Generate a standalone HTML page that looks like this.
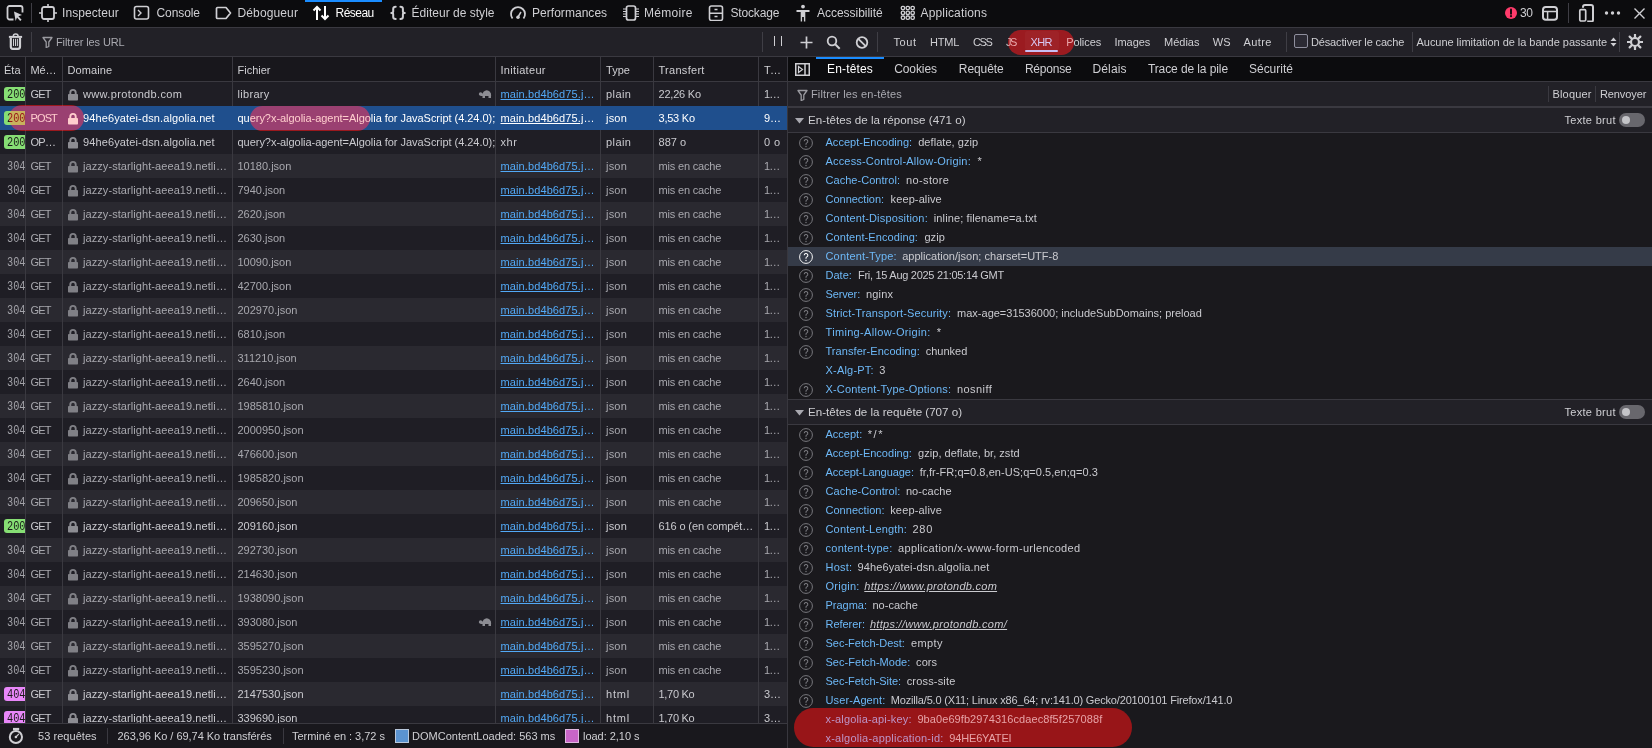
<!DOCTYPE html>
<html><head><meta charset="utf-8"><style>
html,body{margin:0;padding:0;}
body{width:1652px;height:748px;overflow:hidden;position:relative;background:#1c1b22;font-family:"Liberation Sans",sans-serif;}
.t{position:absolute;white-space:nowrap;}
.r,.s,.ann,.clip{position:absolute;}
.clip{overflow:hidden;}
.mono{font-family:"Liberation Mono",monospace;}

</style></head><body>
<div class="r" style="left:0px;top:0px;width:1652px;height:27px;background:#0c0c0e;"></div>
<div class="r" style="left:0px;top:27px;width:1652px;height:1px;background:#3a3940;"></div>
<div class="r" style="left:0px;top:28px;width:1652px;height:28px;background:#222127;"></div>
<div class="r" style="left:0px;top:56px;width:1652px;height:1px;background:#3a3940;"></div>
<div class="r" style="left:305px;top:0px;width:77px;height:1.5px;background:#1a8cff;"></div>
<svg class="s" style="left:6px;top:5px" width="18" height="17" viewBox="0 0 18 17"><path d="M7.5 14.5H3.5a2 2 0 0 1-2-2V3a2 2 0 0 1 2-2h11a2 2 0 0 1 2 2v4.5" fill="none" stroke="#cfcfd3" stroke-width="1.8"/><path d="M8 6.5l8 3.6-3.6 1.2 3.2 3.4-1.4 1.3-3.2-3.4-1.4 3.5z" fill="#cfcfd3"/></svg>
<div class="r" style="left:31px;top:3px;width:1px;height:20px;background:#3f3e45;"></div>
<svg class="s" style="left:39px;top:4px" width="18" height="18" viewBox="0 0 18 18"><rect x="3" y="3" width="12" height="12" rx="2" fill="none" stroke="#cfcfd3" stroke-width="1.8"/><path d="M9 0v3M9 15v3M0 9h3M15 9h3" stroke="#cfcfd3" stroke-width="1.6"/></svg>
<div class="t" style="left:62px;top:0.5px;line-height:24px;font-size:12px;color:#cfcfd3;letter-spacing:0.073px;">Inspecteur</div>
<svg class="s" style="left:133px;top:5px" width="18" height="16" viewBox="0 0 18 16"><rect x="1.5" y="1.5" width="14" height="12.5" rx="2" fill="none" stroke="#cfcfd3" stroke-width="1.6"/><path d="M5 5l3 3-3 3" fill="none" stroke="#cfcfd3" stroke-width="1.4"/></svg>
<div class="t" style="left:156.5px;top:0.5px;line-height:24px;font-size:12px;color:#cfcfd3;letter-spacing:-0.089px;">Console</div>
<svg class="s" style="left:215px;top:6px" width="18" height="14" viewBox="0 0 18 14"><path d="M2.5 1.5h8.5l4.5 5.5-4.5 5.5H2.5a1.2 1.2 0 0 1-1-1V2.5a1.2 1.2 0 0 1 1-1z" fill="none" stroke="#cfcfd3" stroke-width="1.7" stroke-linejoin="round"/></svg>
<div class="t" style="left:237.5px;top:0.5px;line-height:24px;font-size:12px;color:#cfcfd3;letter-spacing:0.126px;">Débogueur</div>
<svg class="s" style="left:312px;top:5px" width="18" height="16" viewBox="0 0 18 16"><path d="M5 15V2M1.5 5.5L5 2l3.5 3.5M13 1v13M9.5 10.5L13 14l3.5-3.5" fill="none" stroke="#ffffff" stroke-width="2"/></svg>
<div class="t" style="left:335.5px;top:0.5px;line-height:24px;font-size:12px;color:#ffffff;letter-spacing:-0.515px;">Réseau</div>
<svg class="s" style="left:386px;top:2px" width="24" height="22" viewBox="0 0 24 22"><path d="M9.7 4.85C8 4.85 7.2 5.5 7.2 7V9.5C7.2 10.5 6.5 10.9 5.3 10.9C6.5 10.9 7.2 11.3 7.2 12.3V15C7.2 16.5 8 17 9.7 17M14.4 4.85C16.1 4.85 16.9 5.5 16.9 7V9.5C16.9 10.5 17.6 10.9 18.8 10.9C17.6 10.9 16.9 11.3 16.9 12.3V15C16.9 16.5 16.1 17 14.4 17" fill="none" stroke="#cfcfd3" stroke-width="2" stroke-linecap="round" stroke-linejoin="round"/></svg>
<div class="t" style="left:411.5px;top:0.5px;line-height:24px;font-size:12px;color:#cfcfd3;letter-spacing:0.019px;">Éditeur de style</div>
<svg class="s" style="left:509px;top:4px" width="18" height="16" viewBox="0 0 18 16"><path d="M3.5 14.5A7 7 0 1 1 14.5 14.5" fill="none" stroke="#cfcfd3" stroke-width="1.8"/><path d="M9 13l3-5" stroke="#cfcfd3" stroke-width="1.5"/><circle cx="9" cy="13.2" r="1.8" fill="#cfcfd3"/></svg>
<div class="t" style="left:532px;top:0.5px;line-height:24px;font-size:12px;color:#cfcfd3;letter-spacing:0.036px;">Performances</div>
<svg class="s" style="left:622px;top:5px" width="18" height="16" viewBox="0 0 18 16"><rect x="4.5" y="1" width="9" height="14" rx="2" fill="none" stroke="#cfcfd3" stroke-width="1.7"/><path d="M1 4h3M1 6.5h3M1 9h3M1 11.5h3M14 4h3M14 6.5h3M14 9h3M14 11.5h3" stroke="#cfcfd3" stroke-width="1.1"/></svg>
<div class="t" style="left:644px;top:0.5px;line-height:24px;font-size:12px;color:#cfcfd3;letter-spacing:0.285px;">Mémoire</div>
<svg class="s" style="left:708px;top:5px" width="16" height="16" viewBox="0 0 16 16"><rect x="1.5" y="1" width="13" height="14.5" rx="2" fill="none" stroke="#cfcfd3" stroke-width="1.6"/><path d="M1.5 8.2h13M6.5 4.5h3M6.5 11.5h3" stroke="#cfcfd3" stroke-width="1.4"/></svg>
<div class="t" style="left:730.5px;top:0.5px;line-height:24px;font-size:12px;color:#cfcfd3;letter-spacing:-0.164px;">Stockage</div>
<svg class="s" style="left:795px;top:4px" width="16" height="18" viewBox="0 0 16 18"><circle cx="8" cy="2.6" r="1.9" fill="#cfcfd3"/><path d="M1.5 6h13v2h-4.2v9.5H8.9V13H7.1v4.5H5.7V8H1.5z" fill="#cfcfd3"/></svg>
<div class="t" style="left:817px;top:0.5px;line-height:24px;font-size:12px;color:#cfcfd3;letter-spacing:-0.028px;">Accessibilité</div>
<svg class="s" style="left:899.5px;top:5px" width="16" height="16" viewBox="0 0 16 16"><rect x="1.3" y="1.3" width="3.3" height="3.3" rx="1.3" fill="none" stroke="#cfcfd3" stroke-width="1.35"/><rect x="1.3" y="6.1499999999999995" width="3.3" height="3.3" rx="1.3" fill="none" stroke="#cfcfd3" stroke-width="1.35"/><rect x="1.3" y="11.0" width="3.3" height="3.3" rx="1.3" fill="none" stroke="#cfcfd3" stroke-width="1.35"/><rect x="6.1499999999999995" y="1.3" width="3.3" height="3.3" rx="1.3" fill="none" stroke="#cfcfd3" stroke-width="1.35"/><rect x="6.1499999999999995" y="6.1499999999999995" width="3.3" height="3.3" rx="1.3" fill="none" stroke="#cfcfd3" stroke-width="1.35"/><rect x="6.1499999999999995" y="11.0" width="3.3" height="3.3" rx="1.3" fill="none" stroke="#cfcfd3" stroke-width="1.35"/><rect x="11.0" y="1.3" width="3.3" height="3.3" rx="1.3" fill="none" stroke="#cfcfd3" stroke-width="1.35"/><rect x="11.0" y="6.1499999999999995" width="3.3" height="3.3" rx="1.3" fill="none" stroke="#cfcfd3" stroke-width="1.35"/><rect x="11.0" y="11.0" width="3.3" height="3.3" rx="1.3" fill="none" stroke="#cfcfd3" stroke-width="1.35"/></svg>
<div class="t" style="left:920.5px;top:0.5px;line-height:24px;font-size:12px;color:#cfcfd3;letter-spacing:0.153px;">Applications</div>
<svg class="s" style="left:1505px;top:7px" width="12" height="12" viewBox="0 0 12 12"><circle cx="6" cy="6" r="6" fill="#ff3b6b"/><path d="M6 2.5v4.3" stroke="#1b0a10" stroke-width="2" stroke-linecap="round"/><circle cx="6" cy="9.2" r="1.1" fill="#1b0a10"/></svg>
<div class="t" style="left:1520px;top:0.5px;line-height:24px;font-size:12px;color:#cfcfd3;letter-spacing:-0.359px;">30</div>
<svg class="s" style="left:1541px;top:5px" width="18" height="16" viewBox="0 0 18 16"><rect x="2" y="1.9" width="14" height="12.9" rx="2.8" fill="none" stroke="#cfcfd3" stroke-width="2"/><path d="M2.5 6.4h13M6.6 6.4v7.8" stroke="#cfcfd3" stroke-width="1.5"/></svg>
<div class="r" style="left:1568px;top:3px;width:1px;height:20px;background:#3f3e45;"></div>
<svg class="s" style="left:1577px;top:4px" width="18" height="18" viewBox="0 0 18 18"><path d="M6 3.8V3a2 2 0 0 1 2-2h6a2 2 0 0 1 2 2v13a1.5 1.5 0 0 1-1.5 1.5H10.2" fill="none" stroke="#cfcfd3" stroke-width="2"/><rect x="2.8" y="5.6" width="5.9" height="11.4" rx="1.2" fill="none" stroke="#cfcfd3" stroke-width="1.7"/></svg>
<svg class="s" style="left:1604px;top:10px" width="18" height="6" viewBox="0 0 18 6"><circle cx="2.5" cy="3" r="1.7" fill="#cfcfd3"/><circle cx="8.5" cy="3" r="1.7" fill="#cfcfd3"/><circle cx="14.5" cy="3" r="1.7" fill="#cfcfd3"/></svg>
<svg class="s" style="left:1633px;top:7px" width="13" height="13" viewBox="0 0 13 13"><path d="M1.5 1.5l10 10M11.5 1.5l-10 10" stroke="#cfcfd3" stroke-width="1.4"/></svg>
<svg class="s" style="left:6px;top:30px" width="20" height="24" viewBox="0 0 20 24"><path d="M7.3 6.2a2.4 2.2 0 0 1 4.8 0" fill="none" stroke="#cfcfd3" stroke-width="1.5"/><rect x="2.9" y="5.9" width="13.2" height="2" fill="#cfcfd3"/><path d="M4.8 7.9V16.8a2 2 0 0 0 2 2H12a2 2 0 0 0 2-2V7.9" fill="none" stroke="#cfcfd3" stroke-width="2.2"/><path d="M7.5 8.8v7.2M9.5 8.8v7.2M11.4 8.8v7.2" stroke="#cfcfd3" stroke-width="1"/></svg>
<div class="r" style="left:31px;top:32px;width:1px;height:20px;background:#3f3e45;"></div>
<svg class="s" style="left:42px;top:36px" width="11" height="12" viewBox="0 0 11 12"><path d="M1 1.5h9L6.8 6v4.5L4.2 11.5V6z" fill="none" stroke="#9a9aa0" stroke-width="1.3" stroke-linejoin="round"/></svg>
<div class="t" style="left:56px;top:29.5px;line-height:24px;font-size:11px;color:#a9a9b0;letter-spacing:-0.114px;">Filtrer les URL</div>
<div class="r" style="left:762px;top:32px;width:1px;height:20px;background:#3f3e45;"></div>
<div class="r" style="left:773.5px;top:36px;width:1.3px;height:10px;background:#cfcfd3;"></div>
<div class="r" style="left:780.5px;top:36px;width:1.3px;height:10px;background:#cfcfd3;"></div>
<svg class="s" style="left:800px;top:36px" width="13" height="13" viewBox="0 0 13 13"><path d="M6.5 0.5v12M0.5 6.5h12" stroke="#cfcfd3" stroke-width="1.7"/></svg>
<svg class="s" style="left:826px;top:35px" width="15" height="15" viewBox="0 0 15 15"><circle cx="6" cy="6" r="4.3" fill="none" stroke="#cfcfd3" stroke-width="1.8"/><path d="M9.2 9.2l4.5 4.5" stroke="#cfcfd3" stroke-width="2"/></svg>
<svg class="s" style="left:855px;top:36px" width="14" height="14" viewBox="0 0 14 14"><circle cx="7" cy="6.5" r="5.3" fill="none" stroke="#cfcfd3" stroke-width="1.8"/><path d="M3.3 2.8l7.4 7.4" stroke="#cfcfd3" stroke-width="1.8"/></svg>
<div class="r" style="left:877px;top:32px;width:1px;height:20px;background:#3f3e45;"></div>
<div class="t" style="left:893.5px;top:30.0px;line-height:24px;font-size:11px;color:#cfcfd3;letter-spacing:0.601px;">Tout</div>
<div class="t" style="left:930.0px;top:30.0px;line-height:24px;font-size:11px;color:#cfcfd3;letter-spacing:-0.184px;">HTML</div>
<div class="t" style="left:972.9px;top:30.0px;line-height:24px;font-size:11px;color:#cfcfd3;letter-spacing:-1.312px;">CSS</div>
<div class="t" style="left:1006.0px;top:30.0px;line-height:24px;font-size:11px;color:#cfcfd3;letter-spacing:-1.544px;">JS</div>
<div class="t" style="left:1066.2px;top:30.0px;line-height:24px;font-size:11px;color:#cfcfd3;letter-spacing:-0.078px;">Polices</div>
<div class="t" style="left:1114.5px;top:30.0px;line-height:24px;font-size:11px;color:#cfcfd3;letter-spacing:-0.056px;">Images</div>
<div class="t" style="left:1164.0px;top:30.0px;line-height:24px;font-size:11px;color:#cfcfd3;letter-spacing:0.006px;">Médias</div>
<div class="t" style="left:1212.8px;top:30.0px;line-height:24px;font-size:11px;color:#cfcfd3;letter-spacing:-0.034px;">WS</div>
<div class="t" style="left:1243.5px;top:30.0px;line-height:24px;font-size:11px;color:#cfcfd3;letter-spacing:0.401px;">Autre</div>
<div class="r" style="left:1286px;top:32px;width:1px;height:20px;background:#3f3e45;"></div>
<div class="r" style="left:1294px;top:34px;width:14px;height:14px;background:#2b2a33;box-sizing:border-box;border:1px solid #8f8f9d;border-radius:2px;"></div>
<div class="t" style="left:1311px;top:30.0px;line-height:24px;font-size:11px;color:#cfcfd3;letter-spacing:-0.150px;">Désactiver le cache</div>
<div class="r" style="left:1412px;top:32px;width:1px;height:20px;background:#3f3e45;"></div>
<div class="t" style="left:1416.5px;top:30.0px;line-height:24px;font-size:11px;color:#cfcfd3;letter-spacing:-0.036px;">Aucune limitation de la bande passante</div>
<svg class="s" style="left:1610px;top:37px" width="7" height="10" viewBox="0 0 7 10"><path d="M0.5 4L3.5 0.5 6.5 4zM0.5 6L3.5 9.5 6.5 6z" fill="#cfcfd3"/></svg>
<div class="r" style="left:1619px;top:32px;width:1px;height:20px;background:#3f3e45;"></div>
<svg class="s" style="left:1627px;top:34px" width="16" height="16" viewBox="0 0 16 16"><path d="M13.20 8.00L15.60 8.00" stroke="#cfcfd3" stroke-width="2.2" stroke-linecap="round"/><path d="M11.68 11.68L13.37 13.37" stroke="#cfcfd3" stroke-width="2.2" stroke-linecap="round"/><path d="M8.00 13.20L8.00 15.60" stroke="#cfcfd3" stroke-width="2.2" stroke-linecap="round"/><path d="M4.32 11.68L2.63 13.37" stroke="#cfcfd3" stroke-width="2.2" stroke-linecap="round"/><path d="M2.80 8.00L0.40 8.00" stroke="#cfcfd3" stroke-width="2.2" stroke-linecap="round"/><path d="M4.32 4.32L2.63 2.63" stroke="#cfcfd3" stroke-width="2.2" stroke-linecap="round"/><path d="M8.00 2.80L8.00 0.40" stroke="#cfcfd3" stroke-width="2.2" stroke-linecap="round"/><path d="M11.68 4.32L13.37 2.63" stroke="#cfcfd3" stroke-width="2.2" stroke-linecap="round"/><circle cx="8" cy="8" r="4" fill="none" stroke="#cfcfd3" stroke-width="2.2"/></svg>
<div class="r" style="left:0px;top:57px;width:787px;height:24px;background:#18171c;"></div>
<div class="r" style="left:0px;top:81px;width:787px;height:1px;background:#3a3940;"></div>
<div class="r" style="left:25px;top:57px;width:1px;height:24px;background:#3a3940;"></div>
<div class="r" style="left:62px;top:57px;width:1px;height:24px;background:#3a3940;"></div>
<div class="r" style="left:232px;top:57px;width:1px;height:24px;background:#3a3940;"></div>
<div class="r" style="left:495px;top:57px;width:1px;height:24px;background:#3a3940;"></div>
<div class="r" style="left:600px;top:57px;width:1px;height:24px;background:#3a3940;"></div>
<div class="r" style="left:653px;top:57px;width:1px;height:24px;background:#3a3940;"></div>
<div class="r" style="left:758px;top:57px;width:1px;height:24px;background:#3a3940;"></div>
<div class="t" style="left:4.0px;top:57.5px;line-height:24px;font-size:11px;color:#cfcfd3;width:17px;overflow:hidden;">Éta</div>
<div class="t" style="left:30.5px;top:57.5px;line-height:24px;font-size:11px;color:#cfcfd3;letter-spacing:-0.141px;">Mé…</div>
<div class="t" style="left:67.5px;top:57.5px;line-height:24px;font-size:11px;color:#cfcfd3;letter-spacing:0.111px;">Domaine</div>
<div class="t" style="left:237.5px;top:57.5px;line-height:24px;font-size:11px;color:#cfcfd3;">Fichier</div>
<div class="t" style="left:500.5px;top:57.5px;line-height:24px;font-size:11px;color:#cfcfd3;letter-spacing:0.311px;">Initiateur</div>
<div class="t" style="left:606.0px;top:57.5px;line-height:24px;font-size:11px;color:#cfcfd3;letter-spacing:0.014px;">Type</div>
<div class="t" style="left:658.5px;top:57.5px;line-height:24px;font-size:11px;color:#cfcfd3;letter-spacing:0.286px;">Transfert</div>
<div class="t" style="left:764.0px;top:57.5px;line-height:24px;font-size:11px;color:#cfcfd3;letter-spacing:-0.734px;">T…</div>
<div class="clip" style="left:0;top:82px;width:787px;height:641px;">
<div class="r" style="left:0px;top:0px;width:787px;height:24px;background:#1f1e25;"></div>
<div class="r" style="left:25px;top:0px;width:1px;height:24px;background:#3a3940;"></div>
<div class="r" style="left:62px;top:0px;width:1px;height:24px;background:#3a3940;"></div>
<div class="r" style="left:232px;top:0px;width:1px;height:24px;background:#3a3940;"></div>
<div class="r" style="left:495px;top:0px;width:1px;height:24px;background:#3a3940;"></div>
<div class="r" style="left:600px;top:0px;width:1px;height:24px;background:#3a3940;"></div>
<div class="r" style="left:653px;top:0px;width:1px;height:24px;background:#3a3940;"></div>
<div class="r" style="left:758px;top:0px;width:1px;height:24px;background:#3a3940;"></div>
<div class="r" style="left:4px;top:5px;width:21px;height:14px;background:#86de74;border-radius:3px 0 0 3px;"></div>
<div class="clip" style="left:4px;top:0px;width:21px;height:24px"><div class="t mono" style="left:2.6px;top:0.5px;line-height:24px;font-size:12.5px;color:#1a1a1a;transform:scaleX(0.82);transform-origin:0 0">200</div></div>
<div class="t" style="left:30.5px;top:0.0px;line-height:24px;font-size:11px;color:#cacacf;letter-spacing:-0.863px;">GET</div>
<svg class="s" style="left:68px;top:6px" width="10" height="13" viewBox="0 0 10 13"><path d="M2.3 6.5V4.6a2.7 2.7 0 0 1 5.4 0v1.9" fill="none" stroke="#8d8d93" stroke-width="1.9"/><rect x="0" y="6" width="10" height="6.5" rx="0.8" fill="#8d8d93"/></svg>
<div class="t" style="left:83px;top:0.0px;line-height:24px;font-size:11px;color:#cacacf;letter-spacing:0.364px;">www.protondb.com</div>
<div class="t" style="left:237.5px;top:0.0px;line-height:24px;font-size:11px;color:#cacacf;width:257.5px;overflow:hidden;letter-spacing:0.308px;">library</div>
<svg class="s" style="left:478px;top:7px" width="14" height="10" viewBox="0 0 14 10"><circle cx="2.6" cy="5" r="1.8" fill="#8d8d93"/><path d="M4.3 6.8A4.4 5.6 0 0 1 13.2 6.8z" fill="#8d8d93"/><rect x="2.6" y="4.6" width="10.4" height="2.4" fill="#8d8d93"/><rect x="4.5" y="6" width="2.5" height="3" fill="#8d8d93"/><rect x="10.5" y="6" width="2.5" height="3" fill="#8d8d93"/></svg>
<div class="t" style="left:500.5px;top:0.0px;line-height:24px;font-size:11px;color:#52a9f6;letter-spacing:0.110px;"><span style="text-decoration:underline">main.bd4b6d75.j</span>…</div>
<div class="t" style="left:606px;top:0.0px;line-height:24px;font-size:11px;color:#cacacf;letter-spacing:0.412px;">plain</div>
<div class="t" style="left:658.5px;top:0.0px;line-height:24px;font-size:11px;color:#cacacf;letter-spacing:-0.207px;">22,26 Ko</div>
<div class="t" style="left:764px;top:0.0px;line-height:24px;font-size:11px;color:#cacacf;letter-spacing:-0.925px;">1…</div>
<div class="r" style="left:0px;top:24px;width:787px;height:24px;background:#1f4f8d;"></div>
<div class="r" style="left:4px;top:29px;width:21px;height:14px;background:#86de74;border-radius:3px 0 0 3px;"></div>
<div class="clip" style="left:4px;top:24px;width:21px;height:24px"><div class="t mono" style="left:2.6px;top:0.5px;line-height:24px;font-size:12.5px;color:#1a1a1a;transform:scaleX(0.82);transform-origin:0 0">200</div></div>
<div class="t" style="left:30.5px;top:24.0px;line-height:24px;font-size:11px;color:#ffffff;letter-spacing:-0.884px;">POST</div>
<svg class="s" style="left:68px;top:30px" width="10" height="13" viewBox="0 0 10 13"><path d="M2.3 6.5V4.6a2.7 2.7 0 0 1 5.4 0v1.9" fill="none" stroke="#ffffff" stroke-width="1.9"/><rect x="0" y="6" width="10" height="6.5" rx="0.8" fill="#ffffff"/></svg>
<div class="t" style="left:83px;top:24.0px;line-height:24px;font-size:11px;color:#ffffff;letter-spacing:0.130px;">94he6yatei-dsn.algolia.net</div>
<div class="t" style="left:237.5px;top:24.0px;line-height:24px;font-size:11px;color:#ffffff;width:257.5px;overflow:hidden;letter-spacing:-0.035px;">query?x-algolia-agent=Algolia for JavaScript (4.24.0);</div>
<div class="t" style="left:500.5px;top:24.0px;line-height:24px;font-size:11px;color:#ffffff;letter-spacing:0.110px;"><span style="text-decoration:underline">main.bd4b6d75.j</span>…</div>
<div class="t" style="left:606px;top:24.0px;line-height:24px;font-size:11px;color:#ffffff;letter-spacing:0.204px;">json</div>
<div class="t" style="left:658.5px;top:24.0px;line-height:24px;font-size:11px;color:#ffffff;letter-spacing:-0.237px;">3,53 Ko</div>
<div class="t" style="left:764px;top:24.0px;line-height:24px;font-size:11px;color:#ffffff;letter-spacing:-0.125px;">9…</div>
<div class="r" style="left:0px;top:48px;width:787px;height:24px;background:#1f1e25;"></div>
<div class="r" style="left:25px;top:48px;width:1px;height:24px;background:#3a3940;"></div>
<div class="r" style="left:62px;top:48px;width:1px;height:24px;background:#3a3940;"></div>
<div class="r" style="left:232px;top:48px;width:1px;height:24px;background:#3a3940;"></div>
<div class="r" style="left:495px;top:48px;width:1px;height:24px;background:#3a3940;"></div>
<div class="r" style="left:600px;top:48px;width:1px;height:24px;background:#3a3940;"></div>
<div class="r" style="left:653px;top:48px;width:1px;height:24px;background:#3a3940;"></div>
<div class="r" style="left:758px;top:48px;width:1px;height:24px;background:#3a3940;"></div>
<div class="r" style="left:4px;top:53px;width:21px;height:14px;background:#86de74;border-radius:3px 0 0 3px;"></div>
<div class="clip" style="left:4px;top:48px;width:21px;height:24px"><div class="t mono" style="left:2.6px;top:0.5px;line-height:24px;font-size:12.5px;color:#1a1a1a;transform:scaleX(0.82);transform-origin:0 0">200</div></div>
<div class="t" style="left:30.5px;top:48.0px;line-height:24px;font-size:11px;color:#cacacf;letter-spacing:-0.703px;">OP…</div>
<svg class="s" style="left:68px;top:54px" width="10" height="13" viewBox="0 0 10 13"><path d="M2.3 6.5V4.6a2.7 2.7 0 0 1 5.4 0v1.9" fill="none" stroke="#8d8d93" stroke-width="1.9"/><rect x="0" y="6" width="10" height="6.5" rx="0.8" fill="#8d8d93"/></svg>
<div class="t" style="left:83px;top:48.0px;line-height:24px;font-size:11px;color:#cacacf;letter-spacing:0.130px;">94he6yatei-dsn.algolia.net</div>
<div class="t" style="left:237.5px;top:48.0px;line-height:24px;font-size:11px;color:#cacacf;width:257.5px;overflow:hidden;letter-spacing:-0.035px;">query?x-algolia-agent=Algolia for JavaScript (4.24.0);</div>
<div class="t" style="left:500.5px;top:48.0px;line-height:24px;font-size:11px;color:#cacacf;letter-spacing:0.509px;">xhr</div>
<div class="t" style="left:606px;top:48.0px;line-height:24px;font-size:11px;color:#cacacf;letter-spacing:0.412px;">plain</div>
<div class="t" style="left:658.5px;top:48.0px;line-height:24px;font-size:11px;color:#cacacf;letter-spacing:0.017px;">887 o</div>
<div class="t" style="left:764px;top:48.0px;line-height:24px;font-size:11px;color:#cacacf;letter-spacing:0.452px;">0 o</div>
<div class="r" style="left:0px;top:72px;width:787px;height:24px;background:#2a2930;"></div>
<div class="r" style="left:25px;top:72px;width:1px;height:24px;background:#3a3940;"></div>
<div class="r" style="left:62px;top:72px;width:1px;height:24px;background:#3a3940;"></div>
<div class="r" style="left:232px;top:72px;width:1px;height:24px;background:#3a3940;"></div>
<div class="r" style="left:495px;top:72px;width:1px;height:24px;background:#3a3940;"></div>
<div class="r" style="left:600px;top:72px;width:1px;height:24px;background:#3a3940;"></div>
<div class="r" style="left:653px;top:72px;width:1px;height:24px;background:#3a3940;"></div>
<div class="r" style="left:758px;top:72px;width:1px;height:24px;background:#3a3940;"></div>
<div class="clip" style="left:4px;top:72px;width:21px;height:24px"><div class="t mono" style="left:2.6px;top:0.5px;line-height:24px;font-size:12.5px;color:#a3a3a9;transform:scaleX(0.82);transform-origin:0 0">304</div></div>
<div class="t" style="left:30.5px;top:72.0px;line-height:24px;font-size:11px;color:#a8a8ae;letter-spacing:-0.863px;">GET</div>
<svg class="s" style="left:68px;top:78px" width="10" height="13" viewBox="0 0 10 13"><path d="M2.3 6.5V4.6a2.7 2.7 0 0 1 5.4 0v1.9" fill="none" stroke="#808086" stroke-width="1.9"/><rect x="0" y="6" width="10" height="6.5" rx="0.8" fill="#808086"/></svg>
<div class="t" style="left:83px;top:72.0px;line-height:24px;font-size:11px;color:#a8a8ae;letter-spacing:0.073px;">jazzy-starlight-aeea19.netli…</div>
<div class="t" style="left:237.5px;top:72.0px;line-height:24px;font-size:11px;color:#a8a8ae;width:257.5px;overflow:hidden;">10180.json</div>
<div class="t" style="left:500.5px;top:72.0px;line-height:24px;font-size:11px;color:#52a9f6;letter-spacing:0.110px;"><span style="text-decoration:underline">main.bd4b6d75.j</span>…</div>
<div class="t" style="left:606px;top:72.0px;line-height:24px;font-size:11px;color:#a8a8ae;letter-spacing:0.204px;">json</div>
<div class="t" style="left:658.5px;top:72.0px;line-height:24px;font-size:11px;color:#a8a8ae;letter-spacing:-0.174px;">mis en cache</div>
<div class="t" style="left:764px;top:72.0px;line-height:24px;font-size:11px;color:#a8a8ae;letter-spacing:-0.925px;">1…</div>
<div class="r" style="left:0px;top:96px;width:787px;height:24px;background:#1f1e25;"></div>
<div class="r" style="left:25px;top:96px;width:1px;height:24px;background:#3a3940;"></div>
<div class="r" style="left:62px;top:96px;width:1px;height:24px;background:#3a3940;"></div>
<div class="r" style="left:232px;top:96px;width:1px;height:24px;background:#3a3940;"></div>
<div class="r" style="left:495px;top:96px;width:1px;height:24px;background:#3a3940;"></div>
<div class="r" style="left:600px;top:96px;width:1px;height:24px;background:#3a3940;"></div>
<div class="r" style="left:653px;top:96px;width:1px;height:24px;background:#3a3940;"></div>
<div class="r" style="left:758px;top:96px;width:1px;height:24px;background:#3a3940;"></div>
<div class="clip" style="left:4px;top:96px;width:21px;height:24px"><div class="t mono" style="left:2.6px;top:0.5px;line-height:24px;font-size:12.5px;color:#a3a3a9;transform:scaleX(0.82);transform-origin:0 0">304</div></div>
<div class="t" style="left:30.5px;top:96.0px;line-height:24px;font-size:11px;color:#a8a8ae;letter-spacing:-0.863px;">GET</div>
<svg class="s" style="left:68px;top:102px" width="10" height="13" viewBox="0 0 10 13"><path d="M2.3 6.5V4.6a2.7 2.7 0 0 1 5.4 0v1.9" fill="none" stroke="#808086" stroke-width="1.9"/><rect x="0" y="6" width="10" height="6.5" rx="0.8" fill="#808086"/></svg>
<div class="t" style="left:83px;top:96.0px;line-height:24px;font-size:11px;color:#a8a8ae;letter-spacing:0.073px;">jazzy-starlight-aeea19.netli…</div>
<div class="t" style="left:237.5px;top:96.0px;line-height:24px;font-size:11px;color:#a8a8ae;width:257.5px;overflow:hidden;">7940.json</div>
<div class="t" style="left:500.5px;top:96.0px;line-height:24px;font-size:11px;color:#52a9f6;letter-spacing:0.110px;"><span style="text-decoration:underline">main.bd4b6d75.j</span>…</div>
<div class="t" style="left:606px;top:96.0px;line-height:24px;font-size:11px;color:#a8a8ae;letter-spacing:0.204px;">json</div>
<div class="t" style="left:658.5px;top:96.0px;line-height:24px;font-size:11px;color:#a8a8ae;letter-spacing:-0.174px;">mis en cache</div>
<div class="t" style="left:764px;top:96.0px;line-height:24px;font-size:11px;color:#a8a8ae;letter-spacing:-0.925px;">1…</div>
<div class="r" style="left:0px;top:120px;width:787px;height:24px;background:#2a2930;"></div>
<div class="r" style="left:25px;top:120px;width:1px;height:24px;background:#3a3940;"></div>
<div class="r" style="left:62px;top:120px;width:1px;height:24px;background:#3a3940;"></div>
<div class="r" style="left:232px;top:120px;width:1px;height:24px;background:#3a3940;"></div>
<div class="r" style="left:495px;top:120px;width:1px;height:24px;background:#3a3940;"></div>
<div class="r" style="left:600px;top:120px;width:1px;height:24px;background:#3a3940;"></div>
<div class="r" style="left:653px;top:120px;width:1px;height:24px;background:#3a3940;"></div>
<div class="r" style="left:758px;top:120px;width:1px;height:24px;background:#3a3940;"></div>
<div class="clip" style="left:4px;top:120px;width:21px;height:24px"><div class="t mono" style="left:2.6px;top:0.5px;line-height:24px;font-size:12.5px;color:#a3a3a9;transform:scaleX(0.82);transform-origin:0 0">304</div></div>
<div class="t" style="left:30.5px;top:120.0px;line-height:24px;font-size:11px;color:#a8a8ae;letter-spacing:-0.863px;">GET</div>
<svg class="s" style="left:68px;top:126px" width="10" height="13" viewBox="0 0 10 13"><path d="M2.3 6.5V4.6a2.7 2.7 0 0 1 5.4 0v1.9" fill="none" stroke="#808086" stroke-width="1.9"/><rect x="0" y="6" width="10" height="6.5" rx="0.8" fill="#808086"/></svg>
<div class="t" style="left:83px;top:120.0px;line-height:24px;font-size:11px;color:#a8a8ae;letter-spacing:0.073px;">jazzy-starlight-aeea19.netli…</div>
<div class="t" style="left:237.5px;top:120.0px;line-height:24px;font-size:11px;color:#a8a8ae;width:257.5px;overflow:hidden;">2620.json</div>
<div class="t" style="left:500.5px;top:120.0px;line-height:24px;font-size:11px;color:#52a9f6;letter-spacing:0.110px;"><span style="text-decoration:underline">main.bd4b6d75.j</span>…</div>
<div class="t" style="left:606px;top:120.0px;line-height:24px;font-size:11px;color:#a8a8ae;letter-spacing:0.204px;">json</div>
<div class="t" style="left:658.5px;top:120.0px;line-height:24px;font-size:11px;color:#a8a8ae;letter-spacing:-0.174px;">mis en cache</div>
<div class="t" style="left:764px;top:120.0px;line-height:24px;font-size:11px;color:#a8a8ae;letter-spacing:-0.925px;">1…</div>
<div class="r" style="left:0px;top:144px;width:787px;height:24px;background:#1f1e25;"></div>
<div class="r" style="left:25px;top:144px;width:1px;height:24px;background:#3a3940;"></div>
<div class="r" style="left:62px;top:144px;width:1px;height:24px;background:#3a3940;"></div>
<div class="r" style="left:232px;top:144px;width:1px;height:24px;background:#3a3940;"></div>
<div class="r" style="left:495px;top:144px;width:1px;height:24px;background:#3a3940;"></div>
<div class="r" style="left:600px;top:144px;width:1px;height:24px;background:#3a3940;"></div>
<div class="r" style="left:653px;top:144px;width:1px;height:24px;background:#3a3940;"></div>
<div class="r" style="left:758px;top:144px;width:1px;height:24px;background:#3a3940;"></div>
<div class="clip" style="left:4px;top:144px;width:21px;height:24px"><div class="t mono" style="left:2.6px;top:0.5px;line-height:24px;font-size:12.5px;color:#a3a3a9;transform:scaleX(0.82);transform-origin:0 0">304</div></div>
<div class="t" style="left:30.5px;top:144.0px;line-height:24px;font-size:11px;color:#a8a8ae;letter-spacing:-0.863px;">GET</div>
<svg class="s" style="left:68px;top:150px" width="10" height="13" viewBox="0 0 10 13"><path d="M2.3 6.5V4.6a2.7 2.7 0 0 1 5.4 0v1.9" fill="none" stroke="#808086" stroke-width="1.9"/><rect x="0" y="6" width="10" height="6.5" rx="0.8" fill="#808086"/></svg>
<div class="t" style="left:83px;top:144.0px;line-height:24px;font-size:11px;color:#a8a8ae;letter-spacing:0.073px;">jazzy-starlight-aeea19.netli…</div>
<div class="t" style="left:237.5px;top:144.0px;line-height:24px;font-size:11px;color:#a8a8ae;width:257.5px;overflow:hidden;">2630.json</div>
<div class="t" style="left:500.5px;top:144.0px;line-height:24px;font-size:11px;color:#52a9f6;letter-spacing:0.110px;"><span style="text-decoration:underline">main.bd4b6d75.j</span>…</div>
<div class="t" style="left:606px;top:144.0px;line-height:24px;font-size:11px;color:#a8a8ae;letter-spacing:0.204px;">json</div>
<div class="t" style="left:658.5px;top:144.0px;line-height:24px;font-size:11px;color:#a8a8ae;letter-spacing:-0.174px;">mis en cache</div>
<div class="t" style="left:764px;top:144.0px;line-height:24px;font-size:11px;color:#a8a8ae;letter-spacing:-0.925px;">1…</div>
<div class="r" style="left:0px;top:168px;width:787px;height:24px;background:#2a2930;"></div>
<div class="r" style="left:25px;top:168px;width:1px;height:24px;background:#3a3940;"></div>
<div class="r" style="left:62px;top:168px;width:1px;height:24px;background:#3a3940;"></div>
<div class="r" style="left:232px;top:168px;width:1px;height:24px;background:#3a3940;"></div>
<div class="r" style="left:495px;top:168px;width:1px;height:24px;background:#3a3940;"></div>
<div class="r" style="left:600px;top:168px;width:1px;height:24px;background:#3a3940;"></div>
<div class="r" style="left:653px;top:168px;width:1px;height:24px;background:#3a3940;"></div>
<div class="r" style="left:758px;top:168px;width:1px;height:24px;background:#3a3940;"></div>
<div class="clip" style="left:4px;top:168px;width:21px;height:24px"><div class="t mono" style="left:2.6px;top:0.5px;line-height:24px;font-size:12.5px;color:#a3a3a9;transform:scaleX(0.82);transform-origin:0 0">304</div></div>
<div class="t" style="left:30.5px;top:168.0px;line-height:24px;font-size:11px;color:#a8a8ae;letter-spacing:-0.863px;">GET</div>
<svg class="s" style="left:68px;top:174px" width="10" height="13" viewBox="0 0 10 13"><path d="M2.3 6.5V4.6a2.7 2.7 0 0 1 5.4 0v1.9" fill="none" stroke="#808086" stroke-width="1.9"/><rect x="0" y="6" width="10" height="6.5" rx="0.8" fill="#808086"/></svg>
<div class="t" style="left:83px;top:168.0px;line-height:24px;font-size:11px;color:#a8a8ae;letter-spacing:0.073px;">jazzy-starlight-aeea19.netli…</div>
<div class="t" style="left:237.5px;top:168.0px;line-height:24px;font-size:11px;color:#a8a8ae;width:257.5px;overflow:hidden;">10090.json</div>
<div class="t" style="left:500.5px;top:168.0px;line-height:24px;font-size:11px;color:#52a9f6;letter-spacing:0.110px;"><span style="text-decoration:underline">main.bd4b6d75.j</span>…</div>
<div class="t" style="left:606px;top:168.0px;line-height:24px;font-size:11px;color:#a8a8ae;letter-spacing:0.204px;">json</div>
<div class="t" style="left:658.5px;top:168.0px;line-height:24px;font-size:11px;color:#a8a8ae;letter-spacing:-0.174px;">mis en cache</div>
<div class="t" style="left:764px;top:168.0px;line-height:24px;font-size:11px;color:#a8a8ae;letter-spacing:-0.925px;">1…</div>
<div class="r" style="left:0px;top:192px;width:787px;height:24px;background:#1f1e25;"></div>
<div class="r" style="left:25px;top:192px;width:1px;height:24px;background:#3a3940;"></div>
<div class="r" style="left:62px;top:192px;width:1px;height:24px;background:#3a3940;"></div>
<div class="r" style="left:232px;top:192px;width:1px;height:24px;background:#3a3940;"></div>
<div class="r" style="left:495px;top:192px;width:1px;height:24px;background:#3a3940;"></div>
<div class="r" style="left:600px;top:192px;width:1px;height:24px;background:#3a3940;"></div>
<div class="r" style="left:653px;top:192px;width:1px;height:24px;background:#3a3940;"></div>
<div class="r" style="left:758px;top:192px;width:1px;height:24px;background:#3a3940;"></div>
<div class="clip" style="left:4px;top:192px;width:21px;height:24px"><div class="t mono" style="left:2.6px;top:0.5px;line-height:24px;font-size:12.5px;color:#a3a3a9;transform:scaleX(0.82);transform-origin:0 0">304</div></div>
<div class="t" style="left:30.5px;top:192.0px;line-height:24px;font-size:11px;color:#a8a8ae;letter-spacing:-0.863px;">GET</div>
<svg class="s" style="left:68px;top:198px" width="10" height="13" viewBox="0 0 10 13"><path d="M2.3 6.5V4.6a2.7 2.7 0 0 1 5.4 0v1.9" fill="none" stroke="#808086" stroke-width="1.9"/><rect x="0" y="6" width="10" height="6.5" rx="0.8" fill="#808086"/></svg>
<div class="t" style="left:83px;top:192.0px;line-height:24px;font-size:11px;color:#a8a8ae;letter-spacing:0.073px;">jazzy-starlight-aeea19.netli…</div>
<div class="t" style="left:237.5px;top:192.0px;line-height:24px;font-size:11px;color:#a8a8ae;width:257.5px;overflow:hidden;">42700.json</div>
<div class="t" style="left:500.5px;top:192.0px;line-height:24px;font-size:11px;color:#52a9f6;letter-spacing:0.110px;"><span style="text-decoration:underline">main.bd4b6d75.j</span>…</div>
<div class="t" style="left:606px;top:192.0px;line-height:24px;font-size:11px;color:#a8a8ae;letter-spacing:0.204px;">json</div>
<div class="t" style="left:658.5px;top:192.0px;line-height:24px;font-size:11px;color:#a8a8ae;letter-spacing:-0.174px;">mis en cache</div>
<div class="t" style="left:764px;top:192.0px;line-height:24px;font-size:11px;color:#a8a8ae;letter-spacing:-0.925px;">1…</div>
<div class="r" style="left:0px;top:216px;width:787px;height:24px;background:#2a2930;"></div>
<div class="r" style="left:25px;top:216px;width:1px;height:24px;background:#3a3940;"></div>
<div class="r" style="left:62px;top:216px;width:1px;height:24px;background:#3a3940;"></div>
<div class="r" style="left:232px;top:216px;width:1px;height:24px;background:#3a3940;"></div>
<div class="r" style="left:495px;top:216px;width:1px;height:24px;background:#3a3940;"></div>
<div class="r" style="left:600px;top:216px;width:1px;height:24px;background:#3a3940;"></div>
<div class="r" style="left:653px;top:216px;width:1px;height:24px;background:#3a3940;"></div>
<div class="r" style="left:758px;top:216px;width:1px;height:24px;background:#3a3940;"></div>
<div class="clip" style="left:4px;top:216px;width:21px;height:24px"><div class="t mono" style="left:2.6px;top:0.5px;line-height:24px;font-size:12.5px;color:#a3a3a9;transform:scaleX(0.82);transform-origin:0 0">304</div></div>
<div class="t" style="left:30.5px;top:216.0px;line-height:24px;font-size:11px;color:#a8a8ae;letter-spacing:-0.863px;">GET</div>
<svg class="s" style="left:68px;top:222px" width="10" height="13" viewBox="0 0 10 13"><path d="M2.3 6.5V4.6a2.7 2.7 0 0 1 5.4 0v1.9" fill="none" stroke="#808086" stroke-width="1.9"/><rect x="0" y="6" width="10" height="6.5" rx="0.8" fill="#808086"/></svg>
<div class="t" style="left:83px;top:216.0px;line-height:24px;font-size:11px;color:#a8a8ae;letter-spacing:0.073px;">jazzy-starlight-aeea19.netli…</div>
<div class="t" style="left:237.5px;top:216.0px;line-height:24px;font-size:11px;color:#a8a8ae;width:257.5px;overflow:hidden;">202970.json</div>
<div class="t" style="left:500.5px;top:216.0px;line-height:24px;font-size:11px;color:#52a9f6;letter-spacing:0.110px;"><span style="text-decoration:underline">main.bd4b6d75.j</span>…</div>
<div class="t" style="left:606px;top:216.0px;line-height:24px;font-size:11px;color:#a8a8ae;letter-spacing:0.204px;">json</div>
<div class="t" style="left:658.5px;top:216.0px;line-height:24px;font-size:11px;color:#a8a8ae;letter-spacing:-0.174px;">mis en cache</div>
<div class="t" style="left:764px;top:216.0px;line-height:24px;font-size:11px;color:#a8a8ae;letter-spacing:-0.925px;">1…</div>
<div class="r" style="left:0px;top:240px;width:787px;height:24px;background:#1f1e25;"></div>
<div class="r" style="left:25px;top:240px;width:1px;height:24px;background:#3a3940;"></div>
<div class="r" style="left:62px;top:240px;width:1px;height:24px;background:#3a3940;"></div>
<div class="r" style="left:232px;top:240px;width:1px;height:24px;background:#3a3940;"></div>
<div class="r" style="left:495px;top:240px;width:1px;height:24px;background:#3a3940;"></div>
<div class="r" style="left:600px;top:240px;width:1px;height:24px;background:#3a3940;"></div>
<div class="r" style="left:653px;top:240px;width:1px;height:24px;background:#3a3940;"></div>
<div class="r" style="left:758px;top:240px;width:1px;height:24px;background:#3a3940;"></div>
<div class="clip" style="left:4px;top:240px;width:21px;height:24px"><div class="t mono" style="left:2.6px;top:0.5px;line-height:24px;font-size:12.5px;color:#a3a3a9;transform:scaleX(0.82);transform-origin:0 0">304</div></div>
<div class="t" style="left:30.5px;top:240.0px;line-height:24px;font-size:11px;color:#a8a8ae;letter-spacing:-0.863px;">GET</div>
<svg class="s" style="left:68px;top:246px" width="10" height="13" viewBox="0 0 10 13"><path d="M2.3 6.5V4.6a2.7 2.7 0 0 1 5.4 0v1.9" fill="none" stroke="#808086" stroke-width="1.9"/><rect x="0" y="6" width="10" height="6.5" rx="0.8" fill="#808086"/></svg>
<div class="t" style="left:83px;top:240.0px;line-height:24px;font-size:11px;color:#a8a8ae;letter-spacing:0.073px;">jazzy-starlight-aeea19.netli…</div>
<div class="t" style="left:237.5px;top:240.0px;line-height:24px;font-size:11px;color:#a8a8ae;width:257.5px;overflow:hidden;">6810.json</div>
<div class="t" style="left:500.5px;top:240.0px;line-height:24px;font-size:11px;color:#52a9f6;letter-spacing:0.110px;"><span style="text-decoration:underline">main.bd4b6d75.j</span>…</div>
<div class="t" style="left:606px;top:240.0px;line-height:24px;font-size:11px;color:#a8a8ae;letter-spacing:0.204px;">json</div>
<div class="t" style="left:658.5px;top:240.0px;line-height:24px;font-size:11px;color:#a8a8ae;letter-spacing:-0.174px;">mis en cache</div>
<div class="t" style="left:764px;top:240.0px;line-height:24px;font-size:11px;color:#a8a8ae;letter-spacing:-0.925px;">1…</div>
<div class="r" style="left:0px;top:264px;width:787px;height:24px;background:#2a2930;"></div>
<div class="r" style="left:25px;top:264px;width:1px;height:24px;background:#3a3940;"></div>
<div class="r" style="left:62px;top:264px;width:1px;height:24px;background:#3a3940;"></div>
<div class="r" style="left:232px;top:264px;width:1px;height:24px;background:#3a3940;"></div>
<div class="r" style="left:495px;top:264px;width:1px;height:24px;background:#3a3940;"></div>
<div class="r" style="left:600px;top:264px;width:1px;height:24px;background:#3a3940;"></div>
<div class="r" style="left:653px;top:264px;width:1px;height:24px;background:#3a3940;"></div>
<div class="r" style="left:758px;top:264px;width:1px;height:24px;background:#3a3940;"></div>
<div class="clip" style="left:4px;top:264px;width:21px;height:24px"><div class="t mono" style="left:2.6px;top:0.5px;line-height:24px;font-size:12.5px;color:#a3a3a9;transform:scaleX(0.82);transform-origin:0 0">304</div></div>
<div class="t" style="left:30.5px;top:264.0px;line-height:24px;font-size:11px;color:#a8a8ae;letter-spacing:-0.863px;">GET</div>
<svg class="s" style="left:68px;top:270px" width="10" height="13" viewBox="0 0 10 13"><path d="M2.3 6.5V4.6a2.7 2.7 0 0 1 5.4 0v1.9" fill="none" stroke="#808086" stroke-width="1.9"/><rect x="0" y="6" width="10" height="6.5" rx="0.8" fill="#808086"/></svg>
<div class="t" style="left:83px;top:264.0px;line-height:24px;font-size:11px;color:#a8a8ae;letter-spacing:0.073px;">jazzy-starlight-aeea19.netli…</div>
<div class="t" style="left:237.5px;top:264.0px;line-height:24px;font-size:11px;color:#a8a8ae;width:257.5px;overflow:hidden;">311210.json</div>
<div class="t" style="left:500.5px;top:264.0px;line-height:24px;font-size:11px;color:#52a9f6;letter-spacing:0.110px;"><span style="text-decoration:underline">main.bd4b6d75.j</span>…</div>
<div class="t" style="left:606px;top:264.0px;line-height:24px;font-size:11px;color:#a8a8ae;letter-spacing:0.204px;">json</div>
<div class="t" style="left:658.5px;top:264.0px;line-height:24px;font-size:11px;color:#a8a8ae;letter-spacing:-0.174px;">mis en cache</div>
<div class="t" style="left:764px;top:264.0px;line-height:24px;font-size:11px;color:#a8a8ae;letter-spacing:-0.925px;">1…</div>
<div class="r" style="left:0px;top:288px;width:787px;height:24px;background:#1f1e25;"></div>
<div class="r" style="left:25px;top:288px;width:1px;height:24px;background:#3a3940;"></div>
<div class="r" style="left:62px;top:288px;width:1px;height:24px;background:#3a3940;"></div>
<div class="r" style="left:232px;top:288px;width:1px;height:24px;background:#3a3940;"></div>
<div class="r" style="left:495px;top:288px;width:1px;height:24px;background:#3a3940;"></div>
<div class="r" style="left:600px;top:288px;width:1px;height:24px;background:#3a3940;"></div>
<div class="r" style="left:653px;top:288px;width:1px;height:24px;background:#3a3940;"></div>
<div class="r" style="left:758px;top:288px;width:1px;height:24px;background:#3a3940;"></div>
<div class="clip" style="left:4px;top:288px;width:21px;height:24px"><div class="t mono" style="left:2.6px;top:0.5px;line-height:24px;font-size:12.5px;color:#a3a3a9;transform:scaleX(0.82);transform-origin:0 0">304</div></div>
<div class="t" style="left:30.5px;top:288.0px;line-height:24px;font-size:11px;color:#a8a8ae;letter-spacing:-0.863px;">GET</div>
<svg class="s" style="left:68px;top:294px" width="10" height="13" viewBox="0 0 10 13"><path d="M2.3 6.5V4.6a2.7 2.7 0 0 1 5.4 0v1.9" fill="none" stroke="#808086" stroke-width="1.9"/><rect x="0" y="6" width="10" height="6.5" rx="0.8" fill="#808086"/></svg>
<div class="t" style="left:83px;top:288.0px;line-height:24px;font-size:11px;color:#a8a8ae;letter-spacing:0.073px;">jazzy-starlight-aeea19.netli…</div>
<div class="t" style="left:237.5px;top:288.0px;line-height:24px;font-size:11px;color:#a8a8ae;width:257.5px;overflow:hidden;">2640.json</div>
<div class="t" style="left:500.5px;top:288.0px;line-height:24px;font-size:11px;color:#52a9f6;letter-spacing:0.110px;"><span style="text-decoration:underline">main.bd4b6d75.j</span>…</div>
<div class="t" style="left:606px;top:288.0px;line-height:24px;font-size:11px;color:#a8a8ae;letter-spacing:0.204px;">json</div>
<div class="t" style="left:658.5px;top:288.0px;line-height:24px;font-size:11px;color:#a8a8ae;letter-spacing:-0.174px;">mis en cache</div>
<div class="t" style="left:764px;top:288.0px;line-height:24px;font-size:11px;color:#a8a8ae;letter-spacing:-0.925px;">1…</div>
<div class="r" style="left:0px;top:312px;width:787px;height:24px;background:#2a2930;"></div>
<div class="r" style="left:25px;top:312px;width:1px;height:24px;background:#3a3940;"></div>
<div class="r" style="left:62px;top:312px;width:1px;height:24px;background:#3a3940;"></div>
<div class="r" style="left:232px;top:312px;width:1px;height:24px;background:#3a3940;"></div>
<div class="r" style="left:495px;top:312px;width:1px;height:24px;background:#3a3940;"></div>
<div class="r" style="left:600px;top:312px;width:1px;height:24px;background:#3a3940;"></div>
<div class="r" style="left:653px;top:312px;width:1px;height:24px;background:#3a3940;"></div>
<div class="r" style="left:758px;top:312px;width:1px;height:24px;background:#3a3940;"></div>
<div class="clip" style="left:4px;top:312px;width:21px;height:24px"><div class="t mono" style="left:2.6px;top:0.5px;line-height:24px;font-size:12.5px;color:#a3a3a9;transform:scaleX(0.82);transform-origin:0 0">304</div></div>
<div class="t" style="left:30.5px;top:312.0px;line-height:24px;font-size:11px;color:#a8a8ae;letter-spacing:-0.863px;">GET</div>
<svg class="s" style="left:68px;top:318px" width="10" height="13" viewBox="0 0 10 13"><path d="M2.3 6.5V4.6a2.7 2.7 0 0 1 5.4 0v1.9" fill="none" stroke="#808086" stroke-width="1.9"/><rect x="0" y="6" width="10" height="6.5" rx="0.8" fill="#808086"/></svg>
<div class="t" style="left:83px;top:312.0px;line-height:24px;font-size:11px;color:#a8a8ae;letter-spacing:0.073px;">jazzy-starlight-aeea19.netli…</div>
<div class="t" style="left:237.5px;top:312.0px;line-height:24px;font-size:11px;color:#a8a8ae;width:257.5px;overflow:hidden;">1985810.json</div>
<div class="t" style="left:500.5px;top:312.0px;line-height:24px;font-size:11px;color:#52a9f6;letter-spacing:0.110px;"><span style="text-decoration:underline">main.bd4b6d75.j</span>…</div>
<div class="t" style="left:606px;top:312.0px;line-height:24px;font-size:11px;color:#a8a8ae;letter-spacing:0.204px;">json</div>
<div class="t" style="left:658.5px;top:312.0px;line-height:24px;font-size:11px;color:#a8a8ae;letter-spacing:-0.174px;">mis en cache</div>
<div class="t" style="left:764px;top:312.0px;line-height:24px;font-size:11px;color:#a8a8ae;letter-spacing:-0.925px;">1…</div>
<div class="r" style="left:0px;top:336px;width:787px;height:24px;background:#1f1e25;"></div>
<div class="r" style="left:25px;top:336px;width:1px;height:24px;background:#3a3940;"></div>
<div class="r" style="left:62px;top:336px;width:1px;height:24px;background:#3a3940;"></div>
<div class="r" style="left:232px;top:336px;width:1px;height:24px;background:#3a3940;"></div>
<div class="r" style="left:495px;top:336px;width:1px;height:24px;background:#3a3940;"></div>
<div class="r" style="left:600px;top:336px;width:1px;height:24px;background:#3a3940;"></div>
<div class="r" style="left:653px;top:336px;width:1px;height:24px;background:#3a3940;"></div>
<div class="r" style="left:758px;top:336px;width:1px;height:24px;background:#3a3940;"></div>
<div class="clip" style="left:4px;top:336px;width:21px;height:24px"><div class="t mono" style="left:2.6px;top:0.5px;line-height:24px;font-size:12.5px;color:#a3a3a9;transform:scaleX(0.82);transform-origin:0 0">304</div></div>
<div class="t" style="left:30.5px;top:336.0px;line-height:24px;font-size:11px;color:#a8a8ae;letter-spacing:-0.863px;">GET</div>
<svg class="s" style="left:68px;top:342px" width="10" height="13" viewBox="0 0 10 13"><path d="M2.3 6.5V4.6a2.7 2.7 0 0 1 5.4 0v1.9" fill="none" stroke="#808086" stroke-width="1.9"/><rect x="0" y="6" width="10" height="6.5" rx="0.8" fill="#808086"/></svg>
<div class="t" style="left:83px;top:336.0px;line-height:24px;font-size:11px;color:#a8a8ae;letter-spacing:0.073px;">jazzy-starlight-aeea19.netli…</div>
<div class="t" style="left:237.5px;top:336.0px;line-height:24px;font-size:11px;color:#a8a8ae;width:257.5px;overflow:hidden;">2000950.json</div>
<div class="t" style="left:500.5px;top:336.0px;line-height:24px;font-size:11px;color:#52a9f6;letter-spacing:0.110px;"><span style="text-decoration:underline">main.bd4b6d75.j</span>…</div>
<div class="t" style="left:606px;top:336.0px;line-height:24px;font-size:11px;color:#a8a8ae;letter-spacing:0.204px;">json</div>
<div class="t" style="left:658.5px;top:336.0px;line-height:24px;font-size:11px;color:#a8a8ae;letter-spacing:-0.174px;">mis en cache</div>
<div class="t" style="left:764px;top:336.0px;line-height:24px;font-size:11px;color:#a8a8ae;letter-spacing:-0.925px;">1…</div>
<div class="r" style="left:0px;top:360px;width:787px;height:24px;background:#2a2930;"></div>
<div class="r" style="left:25px;top:360px;width:1px;height:24px;background:#3a3940;"></div>
<div class="r" style="left:62px;top:360px;width:1px;height:24px;background:#3a3940;"></div>
<div class="r" style="left:232px;top:360px;width:1px;height:24px;background:#3a3940;"></div>
<div class="r" style="left:495px;top:360px;width:1px;height:24px;background:#3a3940;"></div>
<div class="r" style="left:600px;top:360px;width:1px;height:24px;background:#3a3940;"></div>
<div class="r" style="left:653px;top:360px;width:1px;height:24px;background:#3a3940;"></div>
<div class="r" style="left:758px;top:360px;width:1px;height:24px;background:#3a3940;"></div>
<div class="clip" style="left:4px;top:360px;width:21px;height:24px"><div class="t mono" style="left:2.6px;top:0.5px;line-height:24px;font-size:12.5px;color:#a3a3a9;transform:scaleX(0.82);transform-origin:0 0">304</div></div>
<div class="t" style="left:30.5px;top:360.0px;line-height:24px;font-size:11px;color:#a8a8ae;letter-spacing:-0.863px;">GET</div>
<svg class="s" style="left:68px;top:366px" width="10" height="13" viewBox="0 0 10 13"><path d="M2.3 6.5V4.6a2.7 2.7 0 0 1 5.4 0v1.9" fill="none" stroke="#808086" stroke-width="1.9"/><rect x="0" y="6" width="10" height="6.5" rx="0.8" fill="#808086"/></svg>
<div class="t" style="left:83px;top:360.0px;line-height:24px;font-size:11px;color:#a8a8ae;letter-spacing:0.073px;">jazzy-starlight-aeea19.netli…</div>
<div class="t" style="left:237.5px;top:360.0px;line-height:24px;font-size:11px;color:#a8a8ae;width:257.5px;overflow:hidden;">476600.json</div>
<div class="t" style="left:500.5px;top:360.0px;line-height:24px;font-size:11px;color:#52a9f6;letter-spacing:0.110px;"><span style="text-decoration:underline">main.bd4b6d75.j</span>…</div>
<div class="t" style="left:606px;top:360.0px;line-height:24px;font-size:11px;color:#a8a8ae;letter-spacing:0.204px;">json</div>
<div class="t" style="left:658.5px;top:360.0px;line-height:24px;font-size:11px;color:#a8a8ae;letter-spacing:-0.174px;">mis en cache</div>
<div class="t" style="left:764px;top:360.0px;line-height:24px;font-size:11px;color:#a8a8ae;letter-spacing:-0.925px;">1…</div>
<div class="r" style="left:0px;top:384px;width:787px;height:24px;background:#1f1e25;"></div>
<div class="r" style="left:25px;top:384px;width:1px;height:24px;background:#3a3940;"></div>
<div class="r" style="left:62px;top:384px;width:1px;height:24px;background:#3a3940;"></div>
<div class="r" style="left:232px;top:384px;width:1px;height:24px;background:#3a3940;"></div>
<div class="r" style="left:495px;top:384px;width:1px;height:24px;background:#3a3940;"></div>
<div class="r" style="left:600px;top:384px;width:1px;height:24px;background:#3a3940;"></div>
<div class="r" style="left:653px;top:384px;width:1px;height:24px;background:#3a3940;"></div>
<div class="r" style="left:758px;top:384px;width:1px;height:24px;background:#3a3940;"></div>
<div class="clip" style="left:4px;top:384px;width:21px;height:24px"><div class="t mono" style="left:2.6px;top:0.5px;line-height:24px;font-size:12.5px;color:#a3a3a9;transform:scaleX(0.82);transform-origin:0 0">304</div></div>
<div class="t" style="left:30.5px;top:384.0px;line-height:24px;font-size:11px;color:#a8a8ae;letter-spacing:-0.863px;">GET</div>
<svg class="s" style="left:68px;top:390px" width="10" height="13" viewBox="0 0 10 13"><path d="M2.3 6.5V4.6a2.7 2.7 0 0 1 5.4 0v1.9" fill="none" stroke="#808086" stroke-width="1.9"/><rect x="0" y="6" width="10" height="6.5" rx="0.8" fill="#808086"/></svg>
<div class="t" style="left:83px;top:384.0px;line-height:24px;font-size:11px;color:#a8a8ae;letter-spacing:0.073px;">jazzy-starlight-aeea19.netli…</div>
<div class="t" style="left:237.5px;top:384.0px;line-height:24px;font-size:11px;color:#a8a8ae;width:257.5px;overflow:hidden;">1985820.json</div>
<div class="t" style="left:500.5px;top:384.0px;line-height:24px;font-size:11px;color:#52a9f6;letter-spacing:0.110px;"><span style="text-decoration:underline">main.bd4b6d75.j</span>…</div>
<div class="t" style="left:606px;top:384.0px;line-height:24px;font-size:11px;color:#a8a8ae;letter-spacing:0.204px;">json</div>
<div class="t" style="left:658.5px;top:384.0px;line-height:24px;font-size:11px;color:#a8a8ae;letter-spacing:-0.174px;">mis en cache</div>
<div class="t" style="left:764px;top:384.0px;line-height:24px;font-size:11px;color:#a8a8ae;letter-spacing:-0.925px;">1…</div>
<div class="r" style="left:0px;top:408px;width:787px;height:24px;background:#2a2930;"></div>
<div class="r" style="left:25px;top:408px;width:1px;height:24px;background:#3a3940;"></div>
<div class="r" style="left:62px;top:408px;width:1px;height:24px;background:#3a3940;"></div>
<div class="r" style="left:232px;top:408px;width:1px;height:24px;background:#3a3940;"></div>
<div class="r" style="left:495px;top:408px;width:1px;height:24px;background:#3a3940;"></div>
<div class="r" style="left:600px;top:408px;width:1px;height:24px;background:#3a3940;"></div>
<div class="r" style="left:653px;top:408px;width:1px;height:24px;background:#3a3940;"></div>
<div class="r" style="left:758px;top:408px;width:1px;height:24px;background:#3a3940;"></div>
<div class="clip" style="left:4px;top:408px;width:21px;height:24px"><div class="t mono" style="left:2.6px;top:0.5px;line-height:24px;font-size:12.5px;color:#a3a3a9;transform:scaleX(0.82);transform-origin:0 0">304</div></div>
<div class="t" style="left:30.5px;top:408.0px;line-height:24px;font-size:11px;color:#a8a8ae;letter-spacing:-0.863px;">GET</div>
<svg class="s" style="left:68px;top:414px" width="10" height="13" viewBox="0 0 10 13"><path d="M2.3 6.5V4.6a2.7 2.7 0 0 1 5.4 0v1.9" fill="none" stroke="#808086" stroke-width="1.9"/><rect x="0" y="6" width="10" height="6.5" rx="0.8" fill="#808086"/></svg>
<div class="t" style="left:83px;top:408.0px;line-height:24px;font-size:11px;color:#a8a8ae;letter-spacing:0.073px;">jazzy-starlight-aeea19.netli…</div>
<div class="t" style="left:237.5px;top:408.0px;line-height:24px;font-size:11px;color:#a8a8ae;width:257.5px;overflow:hidden;">209650.json</div>
<div class="t" style="left:500.5px;top:408.0px;line-height:24px;font-size:11px;color:#52a9f6;letter-spacing:0.110px;"><span style="text-decoration:underline">main.bd4b6d75.j</span>…</div>
<div class="t" style="left:606px;top:408.0px;line-height:24px;font-size:11px;color:#a8a8ae;letter-spacing:0.204px;">json</div>
<div class="t" style="left:658.5px;top:408.0px;line-height:24px;font-size:11px;color:#a8a8ae;letter-spacing:-0.174px;">mis en cache</div>
<div class="t" style="left:764px;top:408.0px;line-height:24px;font-size:11px;color:#a8a8ae;letter-spacing:-0.925px;">1…</div>
<div class="r" style="left:0px;top:432px;width:787px;height:24px;background:#1f1e25;"></div>
<div class="r" style="left:25px;top:432px;width:1px;height:24px;background:#3a3940;"></div>
<div class="r" style="left:62px;top:432px;width:1px;height:24px;background:#3a3940;"></div>
<div class="r" style="left:232px;top:432px;width:1px;height:24px;background:#3a3940;"></div>
<div class="r" style="left:495px;top:432px;width:1px;height:24px;background:#3a3940;"></div>
<div class="r" style="left:600px;top:432px;width:1px;height:24px;background:#3a3940;"></div>
<div class="r" style="left:653px;top:432px;width:1px;height:24px;background:#3a3940;"></div>
<div class="r" style="left:758px;top:432px;width:1px;height:24px;background:#3a3940;"></div>
<div class="r" style="left:4px;top:437px;width:21px;height:14px;background:#86de74;border-radius:3px 0 0 3px;"></div>
<div class="clip" style="left:4px;top:432px;width:21px;height:24px"><div class="t mono" style="left:2.6px;top:0.5px;line-height:24px;font-size:12.5px;color:#1a1a1a;transform:scaleX(0.82);transform-origin:0 0">200</div></div>
<div class="t" style="left:30.5px;top:432.0px;line-height:24px;font-size:11px;color:#cacacf;letter-spacing:-0.863px;">GET</div>
<svg class="s" style="left:68px;top:438px" width="10" height="13" viewBox="0 0 10 13"><path d="M2.3 6.5V4.6a2.7 2.7 0 0 1 5.4 0v1.9" fill="none" stroke="#8d8d93" stroke-width="1.9"/><rect x="0" y="6" width="10" height="6.5" rx="0.8" fill="#8d8d93"/></svg>
<div class="t" style="left:83px;top:432.0px;line-height:24px;font-size:11px;color:#cacacf;letter-spacing:0.073px;">jazzy-starlight-aeea19.netli…</div>
<div class="t" style="left:237.5px;top:432.0px;line-height:24px;font-size:11px;color:#cacacf;width:257.5px;overflow:hidden;">209160.json</div>
<div class="t" style="left:500.5px;top:432.0px;line-height:24px;font-size:11px;color:#52a9f6;letter-spacing:0.110px;"><span style="text-decoration:underline">main.bd4b6d75.j</span>…</div>
<div class="t" style="left:606px;top:432.0px;line-height:24px;font-size:11px;color:#cacacf;letter-spacing:0.204px;">json</div>
<div class="t" style="left:658.5px;top:432.0px;line-height:24px;font-size:11px;color:#cacacf;letter-spacing:-0.120px;">616 o (en compét…</div>
<div class="t" style="left:764px;top:432.0px;line-height:24px;font-size:11px;color:#cacacf;letter-spacing:-0.925px;">1…</div>
<div class="r" style="left:0px;top:456px;width:787px;height:24px;background:#2a2930;"></div>
<div class="r" style="left:25px;top:456px;width:1px;height:24px;background:#3a3940;"></div>
<div class="r" style="left:62px;top:456px;width:1px;height:24px;background:#3a3940;"></div>
<div class="r" style="left:232px;top:456px;width:1px;height:24px;background:#3a3940;"></div>
<div class="r" style="left:495px;top:456px;width:1px;height:24px;background:#3a3940;"></div>
<div class="r" style="left:600px;top:456px;width:1px;height:24px;background:#3a3940;"></div>
<div class="r" style="left:653px;top:456px;width:1px;height:24px;background:#3a3940;"></div>
<div class="r" style="left:758px;top:456px;width:1px;height:24px;background:#3a3940;"></div>
<div class="clip" style="left:4px;top:456px;width:21px;height:24px"><div class="t mono" style="left:2.6px;top:0.5px;line-height:24px;font-size:12.5px;color:#a3a3a9;transform:scaleX(0.82);transform-origin:0 0">304</div></div>
<div class="t" style="left:30.5px;top:456.0px;line-height:24px;font-size:11px;color:#a8a8ae;letter-spacing:-0.863px;">GET</div>
<svg class="s" style="left:68px;top:462px" width="10" height="13" viewBox="0 0 10 13"><path d="M2.3 6.5V4.6a2.7 2.7 0 0 1 5.4 0v1.9" fill="none" stroke="#808086" stroke-width="1.9"/><rect x="0" y="6" width="10" height="6.5" rx="0.8" fill="#808086"/></svg>
<div class="t" style="left:83px;top:456.0px;line-height:24px;font-size:11px;color:#a8a8ae;letter-spacing:0.073px;">jazzy-starlight-aeea19.netli…</div>
<div class="t" style="left:237.5px;top:456.0px;line-height:24px;font-size:11px;color:#a8a8ae;width:257.5px;overflow:hidden;">292730.json</div>
<div class="t" style="left:500.5px;top:456.0px;line-height:24px;font-size:11px;color:#52a9f6;letter-spacing:0.110px;"><span style="text-decoration:underline">main.bd4b6d75.j</span>…</div>
<div class="t" style="left:606px;top:456.0px;line-height:24px;font-size:11px;color:#a8a8ae;letter-spacing:0.204px;">json</div>
<div class="t" style="left:658.5px;top:456.0px;line-height:24px;font-size:11px;color:#a8a8ae;letter-spacing:-0.174px;">mis en cache</div>
<div class="t" style="left:764px;top:456.0px;line-height:24px;font-size:11px;color:#a8a8ae;letter-spacing:-0.925px;">1…</div>
<div class="r" style="left:0px;top:480px;width:787px;height:24px;background:#1f1e25;"></div>
<div class="r" style="left:25px;top:480px;width:1px;height:24px;background:#3a3940;"></div>
<div class="r" style="left:62px;top:480px;width:1px;height:24px;background:#3a3940;"></div>
<div class="r" style="left:232px;top:480px;width:1px;height:24px;background:#3a3940;"></div>
<div class="r" style="left:495px;top:480px;width:1px;height:24px;background:#3a3940;"></div>
<div class="r" style="left:600px;top:480px;width:1px;height:24px;background:#3a3940;"></div>
<div class="r" style="left:653px;top:480px;width:1px;height:24px;background:#3a3940;"></div>
<div class="r" style="left:758px;top:480px;width:1px;height:24px;background:#3a3940;"></div>
<div class="clip" style="left:4px;top:480px;width:21px;height:24px"><div class="t mono" style="left:2.6px;top:0.5px;line-height:24px;font-size:12.5px;color:#a3a3a9;transform:scaleX(0.82);transform-origin:0 0">304</div></div>
<div class="t" style="left:30.5px;top:480.0px;line-height:24px;font-size:11px;color:#a8a8ae;letter-spacing:-0.863px;">GET</div>
<svg class="s" style="left:68px;top:486px" width="10" height="13" viewBox="0 0 10 13"><path d="M2.3 6.5V4.6a2.7 2.7 0 0 1 5.4 0v1.9" fill="none" stroke="#808086" stroke-width="1.9"/><rect x="0" y="6" width="10" height="6.5" rx="0.8" fill="#808086"/></svg>
<div class="t" style="left:83px;top:480.0px;line-height:24px;font-size:11px;color:#a8a8ae;letter-spacing:0.073px;">jazzy-starlight-aeea19.netli…</div>
<div class="t" style="left:237.5px;top:480.0px;line-height:24px;font-size:11px;color:#a8a8ae;width:257.5px;overflow:hidden;">214630.json</div>
<div class="t" style="left:500.5px;top:480.0px;line-height:24px;font-size:11px;color:#52a9f6;letter-spacing:0.110px;"><span style="text-decoration:underline">main.bd4b6d75.j</span>…</div>
<div class="t" style="left:606px;top:480.0px;line-height:24px;font-size:11px;color:#a8a8ae;letter-spacing:0.204px;">json</div>
<div class="t" style="left:658.5px;top:480.0px;line-height:24px;font-size:11px;color:#a8a8ae;letter-spacing:-0.174px;">mis en cache</div>
<div class="t" style="left:764px;top:480.0px;line-height:24px;font-size:11px;color:#a8a8ae;letter-spacing:-0.925px;">1…</div>
<div class="r" style="left:0px;top:504px;width:787px;height:24px;background:#2a2930;"></div>
<div class="r" style="left:25px;top:504px;width:1px;height:24px;background:#3a3940;"></div>
<div class="r" style="left:62px;top:504px;width:1px;height:24px;background:#3a3940;"></div>
<div class="r" style="left:232px;top:504px;width:1px;height:24px;background:#3a3940;"></div>
<div class="r" style="left:495px;top:504px;width:1px;height:24px;background:#3a3940;"></div>
<div class="r" style="left:600px;top:504px;width:1px;height:24px;background:#3a3940;"></div>
<div class="r" style="left:653px;top:504px;width:1px;height:24px;background:#3a3940;"></div>
<div class="r" style="left:758px;top:504px;width:1px;height:24px;background:#3a3940;"></div>
<div class="clip" style="left:4px;top:504px;width:21px;height:24px"><div class="t mono" style="left:2.6px;top:0.5px;line-height:24px;font-size:12.5px;color:#a3a3a9;transform:scaleX(0.82);transform-origin:0 0">304</div></div>
<div class="t" style="left:30.5px;top:504.0px;line-height:24px;font-size:11px;color:#a8a8ae;letter-spacing:-0.863px;">GET</div>
<svg class="s" style="left:68px;top:510px" width="10" height="13" viewBox="0 0 10 13"><path d="M2.3 6.5V4.6a2.7 2.7 0 0 1 5.4 0v1.9" fill="none" stroke="#808086" stroke-width="1.9"/><rect x="0" y="6" width="10" height="6.5" rx="0.8" fill="#808086"/></svg>
<div class="t" style="left:83px;top:504.0px;line-height:24px;font-size:11px;color:#a8a8ae;letter-spacing:0.073px;">jazzy-starlight-aeea19.netli…</div>
<div class="t" style="left:237.5px;top:504.0px;line-height:24px;font-size:11px;color:#a8a8ae;width:257.5px;overflow:hidden;">1938090.json</div>
<div class="t" style="left:500.5px;top:504.0px;line-height:24px;font-size:11px;color:#52a9f6;letter-spacing:0.110px;"><span style="text-decoration:underline">main.bd4b6d75.j</span>…</div>
<div class="t" style="left:606px;top:504.0px;line-height:24px;font-size:11px;color:#a8a8ae;letter-spacing:0.204px;">json</div>
<div class="t" style="left:658.5px;top:504.0px;line-height:24px;font-size:11px;color:#a8a8ae;letter-spacing:-0.174px;">mis en cache</div>
<div class="t" style="left:764px;top:504.0px;line-height:24px;font-size:11px;color:#a8a8ae;letter-spacing:-0.925px;">1…</div>
<div class="r" style="left:0px;top:528px;width:787px;height:24px;background:#1f1e25;"></div>
<div class="r" style="left:25px;top:528px;width:1px;height:24px;background:#3a3940;"></div>
<div class="r" style="left:62px;top:528px;width:1px;height:24px;background:#3a3940;"></div>
<div class="r" style="left:232px;top:528px;width:1px;height:24px;background:#3a3940;"></div>
<div class="r" style="left:495px;top:528px;width:1px;height:24px;background:#3a3940;"></div>
<div class="r" style="left:600px;top:528px;width:1px;height:24px;background:#3a3940;"></div>
<div class="r" style="left:653px;top:528px;width:1px;height:24px;background:#3a3940;"></div>
<div class="r" style="left:758px;top:528px;width:1px;height:24px;background:#3a3940;"></div>
<div class="clip" style="left:4px;top:528px;width:21px;height:24px"><div class="t mono" style="left:2.6px;top:0.5px;line-height:24px;font-size:12.5px;color:#a3a3a9;transform:scaleX(0.82);transform-origin:0 0">304</div></div>
<div class="t" style="left:30.5px;top:528.0px;line-height:24px;font-size:11px;color:#a8a8ae;letter-spacing:-0.863px;">GET</div>
<svg class="s" style="left:68px;top:534px" width="10" height="13" viewBox="0 0 10 13"><path d="M2.3 6.5V4.6a2.7 2.7 0 0 1 5.4 0v1.9" fill="none" stroke="#808086" stroke-width="1.9"/><rect x="0" y="6" width="10" height="6.5" rx="0.8" fill="#808086"/></svg>
<div class="t" style="left:83px;top:528.0px;line-height:24px;font-size:11px;color:#a8a8ae;letter-spacing:0.073px;">jazzy-starlight-aeea19.netli…</div>
<div class="t" style="left:237.5px;top:528.0px;line-height:24px;font-size:11px;color:#a8a8ae;width:257.5px;overflow:hidden;">393080.json</div>
<svg class="s" style="left:478px;top:535px" width="14" height="10" viewBox="0 0 14 10"><circle cx="2.6" cy="5" r="1.8" fill="#8d8d93"/><path d="M4.3 6.8A4.4 5.6 0 0 1 13.2 6.8z" fill="#8d8d93"/><rect x="2.6" y="4.6" width="10.4" height="2.4" fill="#8d8d93"/><rect x="4.5" y="6" width="2.5" height="3" fill="#8d8d93"/><rect x="10.5" y="6" width="2.5" height="3" fill="#8d8d93"/></svg>
<div class="t" style="left:500.5px;top:528.0px;line-height:24px;font-size:11px;color:#52a9f6;letter-spacing:0.110px;"><span style="text-decoration:underline">main.bd4b6d75.j</span>…</div>
<div class="t" style="left:606px;top:528.0px;line-height:24px;font-size:11px;color:#a8a8ae;letter-spacing:0.204px;">json</div>
<div class="t" style="left:658.5px;top:528.0px;line-height:24px;font-size:11px;color:#a8a8ae;letter-spacing:-0.174px;">mis en cache</div>
<div class="t" style="left:764px;top:528.0px;line-height:24px;font-size:11px;color:#a8a8ae;letter-spacing:-0.925px;">1…</div>
<div class="r" style="left:0px;top:552px;width:787px;height:24px;background:#2a2930;"></div>
<div class="r" style="left:25px;top:552px;width:1px;height:24px;background:#3a3940;"></div>
<div class="r" style="left:62px;top:552px;width:1px;height:24px;background:#3a3940;"></div>
<div class="r" style="left:232px;top:552px;width:1px;height:24px;background:#3a3940;"></div>
<div class="r" style="left:495px;top:552px;width:1px;height:24px;background:#3a3940;"></div>
<div class="r" style="left:600px;top:552px;width:1px;height:24px;background:#3a3940;"></div>
<div class="r" style="left:653px;top:552px;width:1px;height:24px;background:#3a3940;"></div>
<div class="r" style="left:758px;top:552px;width:1px;height:24px;background:#3a3940;"></div>
<div class="clip" style="left:4px;top:552px;width:21px;height:24px"><div class="t mono" style="left:2.6px;top:0.5px;line-height:24px;font-size:12.5px;color:#a3a3a9;transform:scaleX(0.82);transform-origin:0 0">304</div></div>
<div class="t" style="left:30.5px;top:552.0px;line-height:24px;font-size:11px;color:#a8a8ae;letter-spacing:-0.863px;">GET</div>
<svg class="s" style="left:68px;top:558px" width="10" height="13" viewBox="0 0 10 13"><path d="M2.3 6.5V4.6a2.7 2.7 0 0 1 5.4 0v1.9" fill="none" stroke="#808086" stroke-width="1.9"/><rect x="0" y="6" width="10" height="6.5" rx="0.8" fill="#808086"/></svg>
<div class="t" style="left:83px;top:552.0px;line-height:24px;font-size:11px;color:#a8a8ae;letter-spacing:0.073px;">jazzy-starlight-aeea19.netli…</div>
<div class="t" style="left:237.5px;top:552.0px;line-height:24px;font-size:11px;color:#a8a8ae;width:257.5px;overflow:hidden;">3595270.json</div>
<div class="t" style="left:500.5px;top:552.0px;line-height:24px;font-size:11px;color:#52a9f6;letter-spacing:0.110px;"><span style="text-decoration:underline">main.bd4b6d75.j</span>…</div>
<div class="t" style="left:606px;top:552.0px;line-height:24px;font-size:11px;color:#a8a8ae;letter-spacing:0.204px;">json</div>
<div class="t" style="left:658.5px;top:552.0px;line-height:24px;font-size:11px;color:#a8a8ae;letter-spacing:-0.174px;">mis en cache</div>
<div class="t" style="left:764px;top:552.0px;line-height:24px;font-size:11px;color:#a8a8ae;letter-spacing:-0.925px;">1…</div>
<div class="r" style="left:0px;top:576px;width:787px;height:24px;background:#1f1e25;"></div>
<div class="r" style="left:25px;top:576px;width:1px;height:24px;background:#3a3940;"></div>
<div class="r" style="left:62px;top:576px;width:1px;height:24px;background:#3a3940;"></div>
<div class="r" style="left:232px;top:576px;width:1px;height:24px;background:#3a3940;"></div>
<div class="r" style="left:495px;top:576px;width:1px;height:24px;background:#3a3940;"></div>
<div class="r" style="left:600px;top:576px;width:1px;height:24px;background:#3a3940;"></div>
<div class="r" style="left:653px;top:576px;width:1px;height:24px;background:#3a3940;"></div>
<div class="r" style="left:758px;top:576px;width:1px;height:24px;background:#3a3940;"></div>
<div class="clip" style="left:4px;top:576px;width:21px;height:24px"><div class="t mono" style="left:2.6px;top:0.5px;line-height:24px;font-size:12.5px;color:#a3a3a9;transform:scaleX(0.82);transform-origin:0 0">304</div></div>
<div class="t" style="left:30.5px;top:576.0px;line-height:24px;font-size:11px;color:#a8a8ae;letter-spacing:-0.863px;">GET</div>
<svg class="s" style="left:68px;top:582px" width="10" height="13" viewBox="0 0 10 13"><path d="M2.3 6.5V4.6a2.7 2.7 0 0 1 5.4 0v1.9" fill="none" stroke="#808086" stroke-width="1.9"/><rect x="0" y="6" width="10" height="6.5" rx="0.8" fill="#808086"/></svg>
<div class="t" style="left:83px;top:576.0px;line-height:24px;font-size:11px;color:#a8a8ae;letter-spacing:0.073px;">jazzy-starlight-aeea19.netli…</div>
<div class="t" style="left:237.5px;top:576.0px;line-height:24px;font-size:11px;color:#a8a8ae;width:257.5px;overflow:hidden;">3595230.json</div>
<div class="t" style="left:500.5px;top:576.0px;line-height:24px;font-size:11px;color:#52a9f6;letter-spacing:0.110px;"><span style="text-decoration:underline">main.bd4b6d75.j</span>…</div>
<div class="t" style="left:606px;top:576.0px;line-height:24px;font-size:11px;color:#a8a8ae;letter-spacing:0.204px;">json</div>
<div class="t" style="left:658.5px;top:576.0px;line-height:24px;font-size:11px;color:#a8a8ae;letter-spacing:-0.174px;">mis en cache</div>
<div class="t" style="left:764px;top:576.0px;line-height:24px;font-size:11px;color:#a8a8ae;letter-spacing:-0.925px;">1…</div>
<div class="r" style="left:0px;top:600px;width:787px;height:24px;background:#2a2930;"></div>
<div class="r" style="left:25px;top:600px;width:1px;height:24px;background:#3a3940;"></div>
<div class="r" style="left:62px;top:600px;width:1px;height:24px;background:#3a3940;"></div>
<div class="r" style="left:232px;top:600px;width:1px;height:24px;background:#3a3940;"></div>
<div class="r" style="left:495px;top:600px;width:1px;height:24px;background:#3a3940;"></div>
<div class="r" style="left:600px;top:600px;width:1px;height:24px;background:#3a3940;"></div>
<div class="r" style="left:653px;top:600px;width:1px;height:24px;background:#3a3940;"></div>
<div class="r" style="left:758px;top:600px;width:1px;height:24px;background:#3a3940;"></div>
<div class="r" style="left:4px;top:605px;width:21px;height:14px;background:#e887f9;border-radius:3px 0 0 3px;"></div>
<div class="clip" style="left:4px;top:600px;width:21px;height:24px"><div class="t mono" style="left:2.6px;top:0.5px;line-height:24px;font-size:12.5px;color:#1a1a1a;transform:scaleX(0.82);transform-origin:0 0">404</div></div>
<div class="t" style="left:30.5px;top:600.0px;line-height:24px;font-size:11px;color:#cacacf;letter-spacing:-0.863px;">GET</div>
<svg class="s" style="left:68px;top:606px" width="10" height="13" viewBox="0 0 10 13"><path d="M2.3 6.5V4.6a2.7 2.7 0 0 1 5.4 0v1.9" fill="none" stroke="#8d8d93" stroke-width="1.9"/><rect x="0" y="6" width="10" height="6.5" rx="0.8" fill="#8d8d93"/></svg>
<div class="t" style="left:83px;top:600.0px;line-height:24px;font-size:11px;color:#cacacf;letter-spacing:0.073px;">jazzy-starlight-aeea19.netli…</div>
<div class="t" style="left:237.5px;top:600.0px;line-height:24px;font-size:11px;color:#cacacf;width:257.5px;overflow:hidden;">2147530.json</div>
<div class="t" style="left:500.5px;top:600.0px;line-height:24px;font-size:11px;color:#52a9f6;letter-spacing:0.110px;"><span style="text-decoration:underline">main.bd4b6d75.j</span>…</div>
<div class="t" style="left:606px;top:600.0px;line-height:24px;font-size:11px;color:#cacacf;letter-spacing:0.840px;">html</div>
<div class="t" style="left:658.5px;top:600.0px;line-height:24px;font-size:11px;color:#cacacf;letter-spacing:-0.287px;">1,70 Ko</div>
<div class="t" style="left:764px;top:600.0px;line-height:24px;font-size:11px;color:#cacacf;letter-spacing:-0.025px;">3…</div>
<div class="r" style="left:0px;top:624px;width:787px;height:24px;background:#1f1e25;"></div>
<div class="r" style="left:25px;top:624px;width:1px;height:24px;background:#3a3940;"></div>
<div class="r" style="left:62px;top:624px;width:1px;height:24px;background:#3a3940;"></div>
<div class="r" style="left:232px;top:624px;width:1px;height:24px;background:#3a3940;"></div>
<div class="r" style="left:495px;top:624px;width:1px;height:24px;background:#3a3940;"></div>
<div class="r" style="left:600px;top:624px;width:1px;height:24px;background:#3a3940;"></div>
<div class="r" style="left:653px;top:624px;width:1px;height:24px;background:#3a3940;"></div>
<div class="r" style="left:758px;top:624px;width:1px;height:24px;background:#3a3940;"></div>
<div class="r" style="left:4px;top:629px;width:21px;height:14px;background:#e887f9;border-radius:3px 0 0 3px;"></div>
<div class="clip" style="left:4px;top:624px;width:21px;height:24px"><div class="t mono" style="left:2.6px;top:0.5px;line-height:24px;font-size:12.5px;color:#1a1a1a;transform:scaleX(0.82);transform-origin:0 0">404</div></div>
<div class="t" style="left:30.5px;top:624.0px;line-height:24px;font-size:11px;color:#cacacf;letter-spacing:-0.863px;">GET</div>
<svg class="s" style="left:68px;top:630px" width="10" height="13" viewBox="0 0 10 13"><path d="M2.3 6.5V4.6a2.7 2.7 0 0 1 5.4 0v1.9" fill="none" stroke="#8d8d93" stroke-width="1.9"/><rect x="0" y="6" width="10" height="6.5" rx="0.8" fill="#8d8d93"/></svg>
<div class="t" style="left:83px;top:624.0px;line-height:24px;font-size:11px;color:#cacacf;letter-spacing:0.073px;">jazzy-starlight-aeea19.netli…</div>
<div class="t" style="left:237.5px;top:624.0px;line-height:24px;font-size:11px;color:#cacacf;width:257.5px;overflow:hidden;">339690.json</div>
<div class="t" style="left:500.5px;top:624.0px;line-height:24px;font-size:11px;color:#52a9f6;letter-spacing:0.110px;"><span style="text-decoration:underline">main.bd4b6d75.j</span>…</div>
<div class="t" style="left:606px;top:624.0px;line-height:24px;font-size:11px;color:#cacacf;letter-spacing:0.840px;">html</div>
<div class="t" style="left:658.5px;top:624.0px;line-height:24px;font-size:11px;color:#cacacf;letter-spacing:-0.287px;">1,70 Ko</div>
<div class="t" style="left:764px;top:624.0px;line-height:24px;font-size:11px;color:#cacacf;letter-spacing:-0.025px;">3…</div>
</div>
<div class="r" style="left:0px;top:723px;width:787px;height:1px;background:#3a3940;"></div>
<div class="r" style="left:0px;top:724px;width:787px;height:24px;background:#19181d;"></div>
<svg class="s" style="left:4px;top:724px" width="26" height="24" viewBox="0 0 26 24"><rect x="9" y="3.9" width="6.2" height="2.4" fill="#cfcfd3"/><circle cx="11.9" cy="13" r="6.1" fill="none" stroke="#cfcfd3" stroke-width="2"/><path d="M11.9 13L14.9 9.9" stroke="#cfcfd3" stroke-width="1.2"/><circle cx="11.9" cy="13" r="1.3" fill="#cfcfd3"/></svg>
<div class="t" style="left:38px;top:724.0px;line-height:24px;font-size:11px;color:#cfcfd3;letter-spacing:0.049px;">53 requêtes</div>
<div class="r" style="left:107px;top:728px;width:1px;height:16px;background:#3a3940;"></div>
<div class="t" style="left:117.5px;top:724.0px;line-height:24px;font-size:11px;color:#cfcfd3;letter-spacing:-0.034px;">263,96 Ko / 69,74 Ko transférés</div>
<div class="r" style="left:283px;top:728px;width:1px;height:16px;background:#3a3940;"></div>
<div class="t" style="left:292px;top:724.0px;line-height:24px;font-size:11px;color:#cfcfd3;letter-spacing:-0.037px;">Terminé en : 3,72 s</div>
<div class="r" style="left:395px;top:729px;width:14px;height:14px;background:#5b93d0;box-sizing:border-box;border:1px solid #b9c8dc;"></div>
<div class="t" style="left:412px;top:724.0px;line-height:24px;font-size:11px;color:#cfcfd3;letter-spacing:0.009px;">DOMContentLoaded: 563 ms</div>
<div class="r" style="left:565px;top:729px;width:14px;height:14px;background:#c865c8;box-sizing:border-box;border:1px solid #e0b8e0;"></div>
<div class="t" style="left:583px;top:724.0px;line-height:24px;font-size:11px;color:#cfcfd3;letter-spacing:-0.034px;">load: 2,10 s</div>
<div class="r" style="left:787px;top:57px;width:1px;height:691px;background:#38373e;"></div>
<div class="r" style="left:788px;top:57px;width:864px;height:24px;background:#0c0c0e;"></div>
<div class="r" style="left:788px;top:81px;width:864px;height:1px;background:#3a3940;"></div>
<svg class="s" style="left:795px;top:63px" width="15" height="13" viewBox="0 0 15 13"><rect x="0.75" y="0.75" width="13.5" height="11.5" fill="none" stroke="#cfcfd3" stroke-width="1.5"/><path d="M10 1v11" stroke="#cfcfd3" stroke-width="1.5"/><path d="M3.5 3.5l4 3-4 3z" fill="none" stroke="#cfcfd3" stroke-width="1.2"/></svg>
<div class="r" style="left:816px;top:57px;width:68px;height:2px;background:#1a8cff;"></div>
<div class="t" style="left:827px;top:57.0px;line-height:24px;font-size:12px;color:#ffffff;letter-spacing:0.157px;">En-têtes</div>
<div class="t" style="left:894.2px;top:57.0px;line-height:24px;font-size:12px;color:#cfcfd3;letter-spacing:-0.093px;">Cookies</div>
<div class="t" style="left:958.8px;top:57.0px;line-height:24px;font-size:12px;color:#cfcfd3;letter-spacing:-0.062px;">Requête</div>
<div class="t" style="left:1024.9px;top:57.0px;line-height:24px;font-size:12px;color:#cfcfd3;letter-spacing:-0.208px;">Réponse</div>
<div class="t" style="left:1092.5px;top:57.0px;line-height:24px;font-size:12px;color:#cfcfd3;letter-spacing:0.128px;">Délais</div>
<div class="t" style="left:1147.9px;top:57.0px;line-height:24px;font-size:12px;color:#cfcfd3;letter-spacing:-0.094px;">Trace de la pile</div>
<div class="t" style="left:1249.0px;top:57.0px;line-height:24px;font-size:12px;color:#cfcfd3;letter-spacing:-0.019px;">Sécurité</div>
<div class="r" style="left:788px;top:82px;width:864px;height:24px;background:#222127;"></div>
<div class="r" style="left:788px;top:106px;width:864px;height:2px;background:#3a3940;"></div>
<svg class="s" style="left:797px;top:89px" width="11" height="12" viewBox="0 0 11 12"><path d="M1 1.5h9L6.8 6v4.5L4.2 11.5V6z" fill="none" stroke="#9a9aa0" stroke-width="1.3" stroke-linejoin="round"/></svg>
<div class="t" style="left:811px;top:82.0px;line-height:24px;font-size:11px;color:#a9a9b0;letter-spacing:0.140px;">Filtrer les en-têtes</div>
<div class="r" style="left:1548px;top:86px;width:1px;height:16px;background:#3a3940;"></div>
<div class="t" style="left:1552.5px;top:82.0px;line-height:24px;font-size:11px;color:#cfcfd3;letter-spacing:0.163px;">Bloquer</div>
<div class="r" style="left:1595px;top:86px;width:1px;height:16px;background:#3a3940;"></div>
<div class="t" style="left:1600px;top:82.0px;line-height:24px;font-size:11px;color:#cfcfd3;letter-spacing:-0.111px;">Renvoyer</div>
<div class="r" style="left:788px;top:108px;width:864px;height:640px;background:#1a191d;"></div>
<div class="r" style="left:788px;top:108px;width:864px;height:24px;background:#222127;"></div>
<div class="r" style="left:788px;top:132px;width:864px;height:1px;background:#3a3940;"></div>
<svg class="s" style="left:795px;top:118px" width="9" height="6" viewBox="0 0 9 6"><path d="M0 0h9L4.5 5.5z" fill="#a9a9b0"/></svg>
<div class="t" style="left:808px;top:108.0px;line-height:24px;font-size:11.6px;color:#cfcfd3;letter-spacing:0.037px;">En-têtes de la réponse (471 o)</div>
<div class="t" style="left:1564.5px;top:108.0px;line-height:24px;font-size:11px;color:#cfcfd3;letter-spacing:0.299px;">Texte brut</div>
<div class="r" style="left:1619px;top:113px;width:26px;height:14px;background:#68676d;border-radius:7px;"></div>
<div class="r" style="left:1622px;top:116px;width:8px;height:8px;border-radius:4px;background:#c4c4c8"></div>
<svg class="s" style="left:799px;top:135.5px" width="14" height="14" viewBox="0 0 14 14"><circle cx="7" cy="7" r="6.4" fill="none" stroke="#7c7c82" stroke-width="0.95"/><path d="M5.2 5.3a1.8 1.8 0 1 1 2.6 1.6c-.5.3-.8.6-.8 1.2v.7" fill="none" stroke="#7c7c82" stroke-width="1.05"/><circle cx="7" cy="10.5" r=".7" fill="#7c7c82"/></svg>
<div class="t" style="left:825.5px;top:133.0px;line-height:19px;font-size:11px;color:#6db8f7;letter-spacing:0.025px;">Accept-Encoding:</div>
<div class="t" style="left:918.2px;top:133.0px;line-height:19px;font-size:11px;color:#cacacf;letter-spacing:0.056px;">deflate, gzip</div>
<svg class="s" style="left:799px;top:154.5px" width="14" height="14" viewBox="0 0 14 14"><circle cx="7" cy="7" r="6.4" fill="none" stroke="#7c7c82" stroke-width="0.95"/><path d="M5.2 5.3a1.8 1.8 0 1 1 2.6 1.6c-.5.3-.8.6-.8 1.2v.7" fill="none" stroke="#7c7c82" stroke-width="1.05"/><circle cx="7" cy="10.5" r=".7" fill="#7c7c82"/></svg>
<div class="t" style="left:825.5px;top:152.0px;line-height:19px;font-size:11px;color:#6db8f7;letter-spacing:0.171px;">Access-Control-Allow-Origin:</div>
<div class="t" style="left:977.4px;top:152.0px;line-height:19px;font-size:11px;color:#cacacf;">*</div>
<svg class="s" style="left:799px;top:173.5px" width="14" height="14" viewBox="0 0 14 14"><circle cx="7" cy="7" r="6.4" fill="none" stroke="#7c7c82" stroke-width="0.95"/><path d="M5.2 5.3a1.8 1.8 0 1 1 2.6 1.6c-.5.3-.8.6-.8 1.2v.7" fill="none" stroke="#7c7c82" stroke-width="1.05"/><circle cx="7" cy="10.5" r=".7" fill="#7c7c82"/></svg>
<div class="t" style="left:825.5px;top:171.0px;line-height:19px;font-size:11px;color:#6db8f7;letter-spacing:0.040px;">Cache-Control:</div>
<div class="t" style="left:906.1px;top:171.0px;line-height:19px;font-size:11px;color:#cacacf;letter-spacing:0.349px;">no-store</div>
<svg class="s" style="left:799px;top:192.5px" width="14" height="14" viewBox="0 0 14 14"><circle cx="7" cy="7" r="6.4" fill="none" stroke="#7c7c82" stroke-width="0.95"/><path d="M5.2 5.3a1.8 1.8 0 1 1 2.6 1.6c-.5.3-.8.6-.8 1.2v.7" fill="none" stroke="#7c7c82" stroke-width="1.05"/><circle cx="7" cy="10.5" r=".7" fill="#7c7c82"/></svg>
<div class="t" style="left:825.5px;top:190.0px;line-height:19px;font-size:11px;color:#6db8f7;letter-spacing:-0.012px;">Connection:</div>
<div class="t" style="left:890.6px;top:190.0px;line-height:19px;font-size:11px;color:#cacacf;letter-spacing:0.107px;">keep-alive</div>
<svg class="s" style="left:799px;top:211.5px" width="14" height="14" viewBox="0 0 14 14"><circle cx="7" cy="7" r="6.4" fill="none" stroke="#7c7c82" stroke-width="0.95"/><path d="M5.2 5.3a1.8 1.8 0 1 1 2.6 1.6c-.5.3-.8.6-.8 1.2v.7" fill="none" stroke="#7c7c82" stroke-width="1.05"/><circle cx="7" cy="10.5" r=".7" fill="#7c7c82"/></svg>
<div class="t" style="left:825.5px;top:209.0px;line-height:19px;font-size:11px;color:#6db8f7;letter-spacing:0.165px;">Content-Disposition:</div>
<div class="t" style="left:933.8px;top:209.0px;line-height:19px;font-size:11px;color:#cacacf;letter-spacing:0.119px;">inline; filename=a.txt</div>
<svg class="s" style="left:799px;top:230.5px" width="14" height="14" viewBox="0 0 14 14"><circle cx="7" cy="7" r="6.4" fill="none" stroke="#7c7c82" stroke-width="0.95"/><path d="M5.2 5.3a1.8 1.8 0 1 1 2.6 1.6c-.5.3-.8.6-.8 1.2v.7" fill="none" stroke="#7c7c82" stroke-width="1.05"/><circle cx="7" cy="10.5" r=".7" fill="#7c7c82"/></svg>
<div class="t" style="left:825.5px;top:228.0px;line-height:19px;font-size:11px;color:#6db8f7;letter-spacing:0.080px;">Content-Encoding:</div>
<div class="t" style="left:924.4px;top:228.0px;line-height:19px;font-size:11px;color:#cacacf;letter-spacing:0.104px;">gzip</div>
<div class="r" style="left:788px;top:247px;width:864px;height:19px;background:#353b48;"></div>
<svg class="s" style="left:799px;top:249.5px" width="14" height="14" viewBox="0 0 14 14"><circle cx="7" cy="7" r="6.4" fill="none" stroke="#ffffff" stroke-width="0.95"/><path d="M5.2 5.3a1.8 1.8 0 1 1 2.6 1.6c-.5.3-.8.6-.8 1.2v.7" fill="none" stroke="#ffffff" stroke-width="1.05"/><circle cx="7" cy="10.5" r=".7" fill="#ffffff"/></svg>
<div class="t" style="left:825.5px;top:247.0px;line-height:19px;font-size:11px;color:#6db8f7;letter-spacing:0.167px;">Content-Type:</div>
<div class="t" style="left:902.2px;top:247.0px;line-height:19px;font-size:11px;color:#cacacf;letter-spacing:0.020px;">application/json; charset=UTF-8</div>
<svg class="s" style="left:799px;top:268.5px" width="14" height="14" viewBox="0 0 14 14"><circle cx="7" cy="7" r="6.4" fill="none" stroke="#7c7c82" stroke-width="0.95"/><path d="M5.2 5.3a1.8 1.8 0 1 1 2.6 1.6c-.5.3-.8.6-.8 1.2v.7" fill="none" stroke="#7c7c82" stroke-width="1.05"/><circle cx="7" cy="10.5" r=".7" fill="#7c7c82"/></svg>
<div class="t" style="left:825.5px;top:266.0px;line-height:19px;font-size:11px;color:#6db8f7;letter-spacing:0.026px;">Date:</div>
<div class="t" style="left:858.0px;top:266.0px;line-height:19px;font-size:11px;color:#cacacf;letter-spacing:-0.282px;">Fri, 15 Aug 2025 21:05:14 GMT</div>
<svg class="s" style="left:799px;top:287.5px" width="14" height="14" viewBox="0 0 14 14"><circle cx="7" cy="7" r="6.4" fill="none" stroke="#7c7c82" stroke-width="0.95"/><path d="M5.2 5.3a1.8 1.8 0 1 1 2.6 1.6c-.5.3-.8.6-.8 1.2v.7" fill="none" stroke="#7c7c82" stroke-width="1.05"/><circle cx="7" cy="10.5" r=".7" fill="#7c7c82"/></svg>
<div class="t" style="left:825.5px;top:285.0px;line-height:19px;font-size:11px;color:#6db8f7;letter-spacing:-0.128px;">Server:</div>
<div class="t" style="left:866.0px;top:285.0px;line-height:19px;font-size:11px;color:#cacacf;letter-spacing:0.176px;">nginx</div>
<svg class="s" style="left:799px;top:306.5px" width="14" height="14" viewBox="0 0 14 14"><circle cx="7" cy="7" r="6.4" fill="none" stroke="#7c7c82" stroke-width="0.95"/><path d="M5.2 5.3a1.8 1.8 0 1 1 2.6 1.6c-.5.3-.8.6-.8 1.2v.7" fill="none" stroke="#7c7c82" stroke-width="1.05"/><circle cx="7" cy="10.5" r=".7" fill="#7c7c82"/></svg>
<div class="t" style="left:825.5px;top:304.0px;line-height:19px;font-size:11px;color:#6db8f7;letter-spacing:0.146px;">Strict-Transport-Security:</div>
<div class="t" style="left:957.1px;top:304.0px;line-height:19px;font-size:11px;color:#cacacf;letter-spacing:-0.005px;">max-age=31536000; includeSubDomains; preload</div>
<svg class="s" style="left:799px;top:325.5px" width="14" height="14" viewBox="0 0 14 14"><circle cx="7" cy="7" r="6.4" fill="none" stroke="#7c7c82" stroke-width="0.95"/><path d="M5.2 5.3a1.8 1.8 0 1 1 2.6 1.6c-.5.3-.8.6-.8 1.2v.7" fill="none" stroke="#7c7c82" stroke-width="1.05"/><circle cx="7" cy="10.5" r=".7" fill="#7c7c82"/></svg>
<div class="t" style="left:825.5px;top:323.0px;line-height:19px;font-size:11px;color:#6db8f7;letter-spacing:0.326px;">Timing-Allow-Origin:</div>
<div class="t" style="left:936.8px;top:323.0px;line-height:19px;font-size:11px;color:#cacacf;">*</div>
<svg class="s" style="left:799px;top:344.5px" width="14" height="14" viewBox="0 0 14 14"><circle cx="7" cy="7" r="6.4" fill="none" stroke="#7c7c82" stroke-width="0.95"/><path d="M5.2 5.3a1.8 1.8 0 1 1 2.6 1.6c-.5.3-.8.6-.8 1.2v.7" fill="none" stroke="#7c7c82" stroke-width="1.05"/><circle cx="7" cy="10.5" r=".7" fill="#7c7c82"/></svg>
<div class="t" style="left:825.5px;top:342.0px;line-height:19px;font-size:11px;color:#6db8f7;letter-spacing:0.062px;">Transfer-Encoding:</div>
<div class="t" style="left:925.7px;top:342.0px;line-height:19px;font-size:11px;color:#cacacf;letter-spacing:0.001px;">chunked</div>
<div class="t" style="left:825.5px;top:361.0px;line-height:19px;font-size:11px;color:#6db8f7;letter-spacing:0.204px;">X-Alg-PT:</div>
<div class="t" style="left:879.2px;top:361.0px;line-height:19px;font-size:11px;color:#cacacf;">3</div>
<svg class="s" style="left:799px;top:382.5px" width="14" height="14" viewBox="0 0 14 14"><circle cx="7" cy="7" r="6.4" fill="none" stroke="#7c7c82" stroke-width="0.95"/><path d="M5.2 5.3a1.8 1.8 0 1 1 2.6 1.6c-.5.3-.8.6-.8 1.2v.7" fill="none" stroke="#7c7c82" stroke-width="1.05"/><circle cx="7" cy="10.5" r=".7" fill="#7c7c82"/></svg>
<div class="t" style="left:825.5px;top:380.0px;line-height:19px;font-size:11px;color:#6db8f7;letter-spacing:0.174px;">X-Content-Type-Options:</div>
<div class="t" style="left:957.1px;top:380.0px;line-height:19px;font-size:11px;color:#cacacf;letter-spacing:0.397px;">nosniff</div>
<div class="r" style="left:788px;top:399px;width:864px;height:1px;background:#3a3940;"></div>
<div class="r" style="left:788px;top:400px;width:864px;height:24px;background:#222127;"></div>
<div class="r" style="left:788px;top:424px;width:864px;height:1px;background:#3a3940;"></div>
<svg class="s" style="left:795px;top:410px" width="9" height="6" viewBox="0 0 9 6"><path d="M0 0h9L4.5 5.5z" fill="#a9a9b0"/></svg>
<div class="t" style="left:808px;top:400.0px;line-height:24px;font-size:11.6px;color:#cfcfd3;">En-têtes de la requête (707 o)</div>
<div class="t" style="left:1564.5px;top:400.0px;line-height:24px;font-size:11px;color:#cfcfd3;letter-spacing:0.299px;">Texte brut</div>
<div class="r" style="left:1619px;top:405px;width:26px;height:14px;background:#68676d;border-radius:7px;"></div>
<div class="r" style="left:1622px;top:408px;width:8px;height:8px;border-radius:4px;background:#c4c4c8"></div>
<svg class="s" style="left:799px;top:427.5px" width="14" height="14" viewBox="0 0 14 14"><circle cx="7" cy="7" r="6.4" fill="none" stroke="#7c7c82" stroke-width="0.95"/><path d="M5.2 5.3a1.8 1.8 0 1 1 2.6 1.6c-.5.3-.8.6-.8 1.2v.7" fill="none" stroke="#7c7c82" stroke-width="1.05"/><circle cx="7" cy="10.5" r=".7" fill="#7c7c82"/></svg>
<div class="t" style="left:825.5px;top:425.0px;line-height:19px;font-size:11px;color:#6db8f7;letter-spacing:0.002px;">Accept:</div>
<div class="t" style="left:867.7px;top:425.0px;line-height:19px;font-size:11px;color:#cacacf;letter-spacing:1.587px;">*/*</div>
<svg class="s" style="left:799px;top:446.5px" width="14" height="14" viewBox="0 0 14 14"><circle cx="7" cy="7" r="6.4" fill="none" stroke="#7c7c82" stroke-width="0.95"/><path d="M5.2 5.3a1.8 1.8 0 1 1 2.6 1.6c-.5.3-.8.6-.8 1.2v.7" fill="none" stroke="#7c7c82" stroke-width="1.05"/><circle cx="7" cy="10.5" r=".7" fill="#7c7c82"/></svg>
<div class="t" style="left:825.5px;top:444.0px;line-height:19px;font-size:11px;color:#6db8f7;letter-spacing:0.012px;">Accept-Encoding:</div>
<div class="t" style="left:918.1px;top:444.0px;line-height:19px;font-size:11px;color:#cacacf;letter-spacing:0.028px;">gzip, deflate, br, zstd</div>
<svg class="s" style="left:799px;top:465.5px" width="14" height="14" viewBox="0 0 14 14"><circle cx="7" cy="7" r="6.4" fill="none" stroke="#7c7c82" stroke-width="0.95"/><path d="M5.2 5.3a1.8 1.8 0 1 1 2.6 1.6c-.5.3-.8.6-.8 1.2v.7" fill="none" stroke="#7c7c82" stroke-width="1.05"/><circle cx="7" cy="10.5" r=".7" fill="#7c7c82"/></svg>
<div class="t" style="left:825.5px;top:463.0px;line-height:19px;font-size:11px;color:#6db8f7;letter-spacing:-0.053px;">Accept-Language:</div>
<div class="t" style="left:919.7px;top:463.0px;line-height:19px;font-size:11px;color:#cacacf;letter-spacing:0.052px;">fr,fr-FR;q=0.8,en-US;q=0.5,en;q=0.3</div>
<svg class="s" style="left:799px;top:484.5px" width="14" height="14" viewBox="0 0 14 14"><circle cx="7" cy="7" r="6.4" fill="none" stroke="#7c7c82" stroke-width="0.95"/><path d="M5.2 5.3a1.8 1.8 0 1 1 2.6 1.6c-.5.3-.8.6-.8 1.2v.7" fill="none" stroke="#7c7c82" stroke-width="1.05"/><circle cx="7" cy="10.5" r=".7" fill="#7c7c82"/></svg>
<div class="t" style="left:825.5px;top:482.0px;line-height:19px;font-size:11px;color:#6db8f7;letter-spacing:0.055px;">Cache-Control:</div>
<div class="t" style="left:905.9px;top:482.0px;line-height:19px;font-size:11px;color:#cacacf;letter-spacing:0.062px;">no-cache</div>
<svg class="s" style="left:799px;top:503.5px" width="14" height="14" viewBox="0 0 14 14"><circle cx="7" cy="7" r="6.4" fill="none" stroke="#7c7c82" stroke-width="0.95"/><path d="M5.2 5.3a1.8 1.8 0 1 1 2.6 1.6c-.5.3-.8.6-.8 1.2v.7" fill="none" stroke="#7c7c82" stroke-width="1.05"/><circle cx="7" cy="10.5" r=".7" fill="#7c7c82"/></svg>
<div class="t" style="left:825.5px;top:501.0px;line-height:19px;font-size:11px;color:#6db8f7;letter-spacing:0.028px;">Connection:</div>
<div class="t" style="left:890.2px;top:501.0px;line-height:19px;font-size:11px;color:#cacacf;letter-spacing:0.162px;">keep-alive</div>
<svg class="s" style="left:799px;top:522.5px" width="14" height="14" viewBox="0 0 14 14"><circle cx="7" cy="7" r="6.4" fill="none" stroke="#7c7c82" stroke-width="0.95"/><path d="M5.2 5.3a1.8 1.8 0 1 1 2.6 1.6c-.5.3-.8.6-.8 1.2v.7" fill="none" stroke="#7c7c82" stroke-width="1.05"/><circle cx="7" cy="10.5" r=".7" fill="#7c7c82"/></svg>
<div class="t" style="left:825.5px;top:520.0px;line-height:19px;font-size:11px;color:#6db8f7;letter-spacing:0.179px;">Content-Length:</div>
<div class="t" style="left:912.4px;top:520.0px;line-height:19px;font-size:11px;color:#cacacf;letter-spacing:0.770px;">280</div>
<svg class="s" style="left:799px;top:541.5px" width="14" height="14" viewBox="0 0 14 14"><circle cx="7" cy="7" r="6.4" fill="none" stroke="#7c7c82" stroke-width="0.95"/><path d="M5.2 5.3a1.8 1.8 0 1 1 2.6 1.6c-.5.3-.8.6-.8 1.2v.7" fill="none" stroke="#7c7c82" stroke-width="1.05"/><circle cx="7" cy="10.5" r=".7" fill="#7c7c82"/></svg>
<div class="t" style="left:825.5px;top:539.0px;line-height:19px;font-size:11px;color:#6db8f7;letter-spacing:0.259px;">content-type:</div>
<div class="t" style="left:898.1px;top:539.0px;line-height:19px;font-size:11px;color:#cacacf;letter-spacing:0.297px;">application/x-www-form-urlencoded</div>
<svg class="s" style="left:799px;top:560.5px" width="14" height="14" viewBox="0 0 14 14"><circle cx="7" cy="7" r="6.4" fill="none" stroke="#7c7c82" stroke-width="0.95"/><path d="M5.2 5.3a1.8 1.8 0 1 1 2.6 1.6c-.5.3-.8.6-.8 1.2v.7" fill="none" stroke="#7c7c82" stroke-width="1.05"/><circle cx="7" cy="10.5" r=".7" fill="#7c7c82"/></svg>
<div class="t" style="left:825.5px;top:558.0px;line-height:19px;font-size:11px;color:#6db8f7;letter-spacing:0.203px;">Host:</div>
<div class="t" style="left:857.5px;top:558.0px;line-height:19px;font-size:11px;color:#cacacf;letter-spacing:0.131px;">94he6yatei-dsn.algolia.net</div>
<svg class="s" style="left:799px;top:579.5px" width="14" height="14" viewBox="0 0 14 14"><circle cx="7" cy="7" r="6.4" fill="none" stroke="#7c7c82" stroke-width="0.95"/><path d="M5.2 5.3a1.8 1.8 0 1 1 2.6 1.6c-.5.3-.8.6-.8 1.2v.7" fill="none" stroke="#7c7c82" stroke-width="1.05"/><circle cx="7" cy="10.5" r=".7" fill="#7c7c82"/></svg>
<div class="t" style="left:825.5px;top:577.0px;line-height:19px;font-size:11px;color:#6db8f7;letter-spacing:0.249px;">Origin:</div>
<div class="t" style="left:864.3px;top:577.0px;line-height:19px;font-size:11px;color:#cacacf;letter-spacing:0.258px;font-style:italic;text-decoration:underline;">https://www.protondb.com</div>
<svg class="s" style="left:799px;top:598.5px" width="14" height="14" viewBox="0 0 14 14"><circle cx="7" cy="7" r="6.4" fill="none" stroke="#7c7c82" stroke-width="0.95"/><path d="M5.2 5.3a1.8 1.8 0 1 1 2.6 1.6c-.5.3-.8.6-.8 1.2v.7" fill="none" stroke="#7c7c82" stroke-width="1.05"/><circle cx="7" cy="10.5" r=".7" fill="#7c7c82"/></svg>
<div class="t" style="left:825.5px;top:596.0px;line-height:19px;font-size:11px;color:#6db8f7;letter-spacing:-0.013px;">Pragma:</div>
<div class="t" style="left:872.4px;top:596.0px;line-height:19px;font-size:11px;color:#cacacf;letter-spacing:0.033px;">no-cache</div>
<svg class="s" style="left:799px;top:617.5px" width="14" height="14" viewBox="0 0 14 14"><circle cx="7" cy="7" r="6.4" fill="none" stroke="#7c7c82" stroke-width="0.95"/><path d="M5.2 5.3a1.8 1.8 0 1 1 2.6 1.6c-.5.3-.8.6-.8 1.2v.7" fill="none" stroke="#7c7c82" stroke-width="1.05"/><circle cx="7" cy="10.5" r=".7" fill="#7c7c82"/></svg>
<div class="t" style="left:825.5px;top:615.0px;line-height:19px;font-size:11px;color:#6db8f7;letter-spacing:-0.036px;">Referer:</div>
<div class="t" style="left:869.9px;top:615.0px;line-height:19px;font-size:11px;color:#cacacf;letter-spacing:0.304px;font-style:italic;text-decoration:underline;">https://www.protondb.com/</div>
<svg class="s" style="left:799px;top:636.5px" width="14" height="14" viewBox="0 0 14 14"><circle cx="7" cy="7" r="6.4" fill="none" stroke="#7c7c82" stroke-width="0.95"/><path d="M5.2 5.3a1.8 1.8 0 1 1 2.6 1.6c-.5.3-.8.6-.8 1.2v.7" fill="none" stroke="#7c7c82" stroke-width="1.05"/><circle cx="7" cy="10.5" r=".7" fill="#7c7c82"/></svg>
<div class="t" style="left:825.5px;top:634.0px;line-height:19px;font-size:11px;color:#6db8f7;letter-spacing:-0.005px;">Sec-Fetch-Dest:</div>
<div class="t" style="left:911.0px;top:634.0px;line-height:19px;font-size:11px;color:#cacacf;letter-spacing:0.383px;">empty</div>
<svg class="s" style="left:799px;top:655.5px" width="14" height="14" viewBox="0 0 14 14"><circle cx="7" cy="7" r="6.4" fill="none" stroke="#7c7c82" stroke-width="0.95"/><path d="M5.2 5.3a1.8 1.8 0 1 1 2.6 1.6c-.5.3-.8.6-.8 1.2v.7" fill="none" stroke="#7c7c82" stroke-width="1.05"/><circle cx="7" cy="10.5" r=".7" fill="#7c7c82"/></svg>
<div class="t" style="left:825.5px;top:653.0px;line-height:19px;font-size:11px;color:#6db8f7;letter-spacing:0.030px;">Sec-Fetch-Mode:</div>
<div class="t" style="left:916.1px;top:653.0px;line-height:19px;font-size:11px;color:#cacacf;letter-spacing:0.040px;">cors</div>
<svg class="s" style="left:799px;top:674.5px" width="14" height="14" viewBox="0 0 14 14"><circle cx="7" cy="7" r="6.4" fill="none" stroke="#7c7c82" stroke-width="0.95"/><path d="M5.2 5.3a1.8 1.8 0 1 1 2.6 1.6c-.5.3-.8.6-.8 1.2v.7" fill="none" stroke="#7c7c82" stroke-width="1.05"/><circle cx="7" cy="10.5" r=".7" fill="#7c7c82"/></svg>
<div class="t" style="left:825.5px;top:672.0px;line-height:19px;font-size:11px;color:#6db8f7;letter-spacing:-0.015px;">Sec-Fetch-Site:</div>
<div class="t" style="left:906.7px;top:672.0px;line-height:19px;font-size:11px;color:#cacacf;letter-spacing:0.171px;">cross-site</div>
<svg class="s" style="left:799px;top:693.5px" width="14" height="14" viewBox="0 0 14 14"><circle cx="7" cy="7" r="6.4" fill="none" stroke="#7c7c82" stroke-width="0.95"/><path d="M5.2 5.3a1.8 1.8 0 1 1 2.6 1.6c-.5.3-.8.6-.8 1.2v.7" fill="none" stroke="#7c7c82" stroke-width="1.05"/><circle cx="7" cy="10.5" r=".7" fill="#7c7c82"/></svg>
<div class="t" style="left:825.5px;top:691.0px;line-height:19px;font-size:11px;color:#6db8f7;letter-spacing:0.110px;">User-Agent:</div>
<div class="t" style="left:890.7px;top:691.0px;line-height:19px;font-size:11px;color:#cacacf;letter-spacing:-0.167px;">Mozilla/5.0 (X11; Linux x86_64; rv:141.0) Gecko/20100101 Firefox/141.0</div>
<div class="t" style="left:825.5px;top:710.0px;line-height:19px;font-size:11px;color:#6db8f7;letter-spacing:0.167px;">x-algolia-api-key:</div>
<div class="t" style="left:917.4px;top:710.0px;line-height:19px;font-size:11px;color:#cacacf;letter-spacing:0.081px;">9ba0e69fb2974316cdaec8f5f257088f</div>
<div class="t" style="left:825.5px;top:729.0px;line-height:19px;font-size:11px;color:#6db8f7;letter-spacing:0.220px;">x-algolia-application-id:</div>
<div class="t" style="left:949.2px;top:729.0px;line-height:19px;font-size:11px;color:#cacacf;letter-spacing:-0.144px;">94HE6YATEI</div>
<div class="ann" style="left:1008px;top:30px;width:66px;height:25px;border-radius:12.5px;background:rgb(255,205,205);mix-blend-mode:multiply"></div>
<div class="ann" style="left:1008px;top:30px;width:66px;height:25px;border-radius:12.5px;background:rgb(140,0,0);mix-blend-mode:screen"></div>
<div class="ann" style="left:9px;top:105px;width:75px;height:26px;border-radius:13px;background:rgb(255,205,205);mix-blend-mode:multiply"></div>
<div class="ann" style="left:9px;top:105px;width:75px;height:26px;border-radius:13px;background:rgb(140,0,0);mix-blend-mode:screen"></div>
<div class="ann" style="left:250px;top:106px;width:120px;height:25px;border-radius:12.5px;background:rgb(255,205,205);mix-blend-mode:multiply"></div>
<div class="ann" style="left:250px;top:106px;width:120px;height:25px;border-radius:12.5px;background:rgb(140,0,0);mix-blend-mode:screen"></div>
<div class="ann" style="left:794px;top:708px;width:338px;height:39px;border-radius:19.5px;background:rgb(255,205,205);mix-blend-mode:multiply"></div>
<div class="ann" style="left:794px;top:708px;width:338px;height:39px;border-radius:19.5px;background:rgb(140,0,0);mix-blend-mode:screen"></div>
<div class="r" style="left:1025px;top:31px;width:34px;height:19px;background:rgba(255,255,255,0.03);border-radius:2px;"></div>
<div class="t" style="left:1030.5px;top:30.0px;line-height:24px;font-size:11px;color:#d8c8f4;letter-spacing:-0.617px;">XHR</div>
<div class="r" style="left:1025px;top:50px;width:33px;height:2px;background:#c8bef2;border-radius:1px;"></div>
</body></html>
